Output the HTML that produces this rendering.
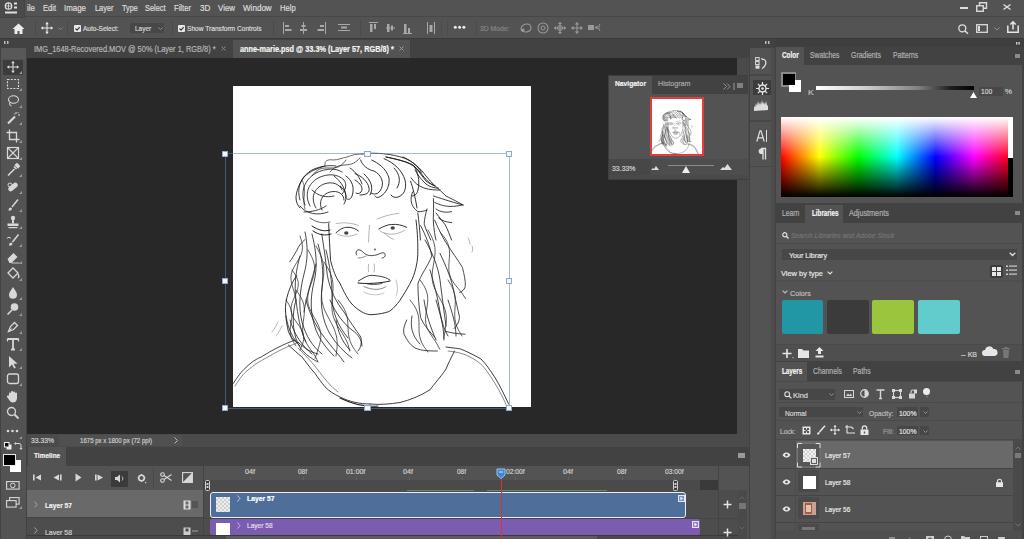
<!DOCTYPE html>
<html><head><meta charset="utf-8">
<style>
*{margin:0;padding:0;box-sizing:border-box}
html,body{width:1024px;height:539px;overflow:hidden;background:#535353;font-family:"Liberation Sans",sans-serif;color:#d6d6d6;font-size:9px;position:relative}
.a{position:absolute}
.t{position:absolute;white-space:pre;line-height:1;transform-origin:0 0;-webkit-text-stroke:0.2px currentColor}
svg{position:absolute;overflow:visible}
</style></head><body>
<div class="a" style="left:0px;top:0px;width:1024px;height:17px;background:#535353;"></div>
<div class="a" style="left:0px;top:16px;width:1024px;height:1px;background:#474747;"></div>
<div class="a" style="left:0px;top:17px;width:1024px;height:21px;background:#535353;"></div>
<div class="a" style="left:0px;top:38px;width:1024px;height:1px;background:#3a3a3a;"></div>
<div class="a" style="left:0px;top:0px;width:25px;height:18px;background:#4a4a4a;border-right:1px solid #444;border-bottom:1px solid #444"></div>
<svg style="left:0px;top:0px" width="25" height="18" viewBox="0 0 25 18" ><circle cx="8.5" cy="6" r="3.2" fill="none" stroke="#e0e0e0" stroke-width="1.3"/><path d="M5.3 6h6.4M8.5 2.8v6.4" stroke="#e0e0e0" stroke-width="0.8"/><rect x="14" y="2.5" width="3" height="2" fill="#e0e0e0"/><rect x="14" y="6.5" width="3" height="2" fill="#e0e0e0"/><rect x="5" y="11.5" width="12" height="2" fill="#e0e0e0"/></svg>
<div class="t" style="left:27px;top:4px;font-size:8.6px;color:#dcdcdc;transform:scaleX(0.929);">ile</div>
<div class="t" style="left:43.2px;top:4px;font-size:8.6px;color:#dcdcdc;transform:scaleX(0.878);">Edit</div>
<div class="t" style="left:64.4px;top:4px;font-size:8.6px;color:#dcdcdc;transform:scaleX(0.917);">Image</div>
<div class="t" style="left:94.5px;top:4px;font-size:8.6px;color:#dcdcdc;transform:scaleX(0.860);">Layer</div>
<div class="t" style="left:121.9px;top:4px;font-size:8.6px;color:#dcdcdc;transform:scaleX(0.842);">Type</div>
<div class="t" style="left:145px;top:4px;font-size:8.6px;color:#dcdcdc;transform:scaleX(0.858);">Select</div>
<div class="t" style="left:174.4px;top:4px;font-size:8.6px;color:#dcdcdc;transform:scaleX(0.890);">Filter</div>
<div class="t" style="left:199.6px;top:4px;font-size:8.6px;color:#dcdcdc;transform:scaleX(0.945);">3D</div>
<div class="t" style="left:218px;top:4px;font-size:8.6px;color:#dcdcdc;transform:scaleX(0.920);">View</div>
<div class="t" style="left:242.7px;top:4px;font-size:8.6px;color:#dcdcdc;transform:scaleX(0.939);">Window</div>
<div class="t" style="left:280.3px;top:4px;font-size:8.6px;color:#dcdcdc;transform:scaleX(0.888);">Help</div>
<div class="a" style="left:960px;top:7px;width:8px;height:2px;background:#dcdcdc;"></div>
<svg style="left:976px;top:2px" width="12" height="10" viewBox="0 0 12 10" ><rect x="0.75" y="3.75" width="6.5" height="5.5" fill="none" stroke="#dcdcdc" stroke-width="1.4"/><path d="M3.5 3.5V0.75h7v5.5H7.5" fill="none" stroke="#dcdcdc" stroke-width="1.4"/></svg>
<svg style="left:1003px;top:4px" width="8" height="6" viewBox="0 0 8 6" ><path d="M0.5 0.5l7 5M7.5 0.5l-7 5" stroke="#dcdcdc" stroke-width="1.5"/></svg>
<div class="a" style="left:0px;top:39px;width:1024px;height:19px;background:#424242;"></div>
<div class="a" style="left:233px;top:40px;width:177px;height:18px;background:#535353;"></div>
<div class="t" style="left:34.4px;top:45px;font-size:8.4px;color:#b4b4b4;transform:scaleX(0.886);">IMG_1648-Recovered.MOV @ 50% (Layer 1, RGB/8) *</div>
<svg style="left:221px;top:46px" width="5" height="5" viewBox="0 0 5 5" ><path d="M0.5 0.5l4 4M4.5 0.5l-4 4" stroke="#8a8a8a" stroke-width="1"/></svg>
<div class="t" style="left:239.7px;top:45px;font-size:8.4px;color:#f4f4f4;font-weight:bold;transform:scaleX(0.873);">anne-marie.psd @ 33.3% (Layer 57, RGB/8) *</div>
<svg style="left:399px;top:46px" width="5" height="5" viewBox="0 0 5 5" ><path d="M0.5 0.5l4 4M4.5 0.5l-4 4" stroke="#9a9a9a" stroke-width="1"/></svg>
<div class="a" style="left:0px;top:39px;width:27px;height:500px;background:#424242;"></div>
<div class="a" style="left:1px;top:48px;width:25px;height:491px;background:#535353;"></div>
<div class="a" style="left:1px;top:48px;width:25px;height:11px;background:#585858;"></div>
<svg style="left:4px;top:41px" width="6" height="4" viewBox="0 0 6 4" ><rect x="0" y="0" width="1.5" height="3" fill="#bbb"/><rect x="3" y="0" width="1.5" height="3" fill="#bbb"/></svg>
<div class="a" style="left:3px;top:60px;width:20px;height:15px;background:#3c3c3c;"></div>
<div class="a" style="left:27px;top:58px;width:710px;height:376px;background:#282828;"></div>
<div class="a" style="left:737px;top:58px;width:12px;height:376px;background:#4a4a4a;"></div>
<div class="a" style="left:233px;top:86px;width:298px;height:321px;background:#ffffff;"></div>
<div class="a" style="left:27px;top:434px;width:722px;height:13px;background:#4b4b4b;"></div>
<div class="a" style="left:59px;top:435px;width:123px;height:11px;background:#505050;"></div>
<div class="t" style="left:31px;top:437px;font-size:7.6px;color:#d0d0d0;transform:scaleX(0.893);">33.33%</div>
<div class="t" style="left:80.4px;top:437px;font-size:7.6px;color:#cfcfcf;transform:scaleX(0.801);">1675 px x 1800 px (72 ppi)</div>
<svg style="left:174px;top:437px" width="4" height="7" viewBox="0 0 4 7" ><path d="M0.5 0.5l3 3-3 3" fill="none" stroke="#bbb" stroke-width="1"/></svg>
<div class="a" style="left:27px;top:447px;width:722px;height:92px;background:#535353;"></div>
<div class="a" style="left:27px;top:447px;width:722px;height:19px;background:#424242;"></div>
<div class="a" style="left:28px;top:447px;width:38px;height:19px;background:#535353;"></div>
<div class="t" style="left:33.8px;top:452px;font-size:8.0px;color:#f2f2f2;font-weight:bold;transform:scaleX(0.811);">Timeline</div>
<svg style="left:738px;top:453px" width="7" height="5" viewBox="0 0 7 5" ><rect x="0" y="0" width="7" height="5" fill="#9a9a9a"/></svg>
<div class="a" style="left:27px;top:466px;width:176px;height:24px;background:#535353;"></div>
<div class="a" style="left:203px;top:466px;width:535px;height:24px;background:#535353;"></div>
<div class="a" style="left:27px;top:490px;width:176px;height:28px;background:#696969;"></div>
<div class="a" style="left:27px;top:518px;width:176px;height:21px;background:#4d4d4d;"></div>
<div class="a" style="left:27px;top:517px;width:176px;height:1px;background:#444;"></div>
<div class="a" style="left:203px;top:480px;width:515px;height:10px;background:#4a4a4a;"></div>
<div class="a" style="left:203px;top:490px;width:535px;height:49px;background:#4d4d4d;"></div>
<div class="a" style="left:718px;top:466px;width:1px;height:73px;background:#444;"></div>
<div class="a" style="left:700px;top:480px;width:18px;height:10px;background:#3a3a3a;"></div>
<div class="a" style="left:203px;top:466px;width:1px;height:73px;background:#444;"></div>
<div class="a" style="left:203px;top:518px;width:535px;height:1px;background:#454545;"></div>
<div class="a" style="left:749px;top:39px;width:26px;height:500px;background:#424242;"></div>
<div class="a" style="left:750px;top:48px;width:21px;height:491px;background:#535353;"></div>
<div class="a" style="left:771px;top:48px;width:4px;height:491px;background:#4c4c4c;"></div>
<svg style="left:765px;top:41px" width="6" height="4" viewBox="0 0 6 4" ><rect x="0" y="0" width="1.5" height="3" fill="#bbb"/><rect x="3" y="0" width="1.5" height="3" fill="#bbb"/></svg>
<div class="a" style="left:750px;top:73.5px;width:21px;height:2px;background:#474747;"></div>
<div class="a" style="left:750px;top:120px;width:21px;height:2px;background:#474747;"></div>
<div class="a" style="left:750px;top:165.5px;width:21px;height:1.5px;background:#474747;"></div>
<div class="a" style="left:753px;top:80px;width:18px;height:15px;background:#3c3c3c;"></div>
<div class="a" style="left:775px;top:39px;width:249px;height:500px;background:#424242;"></div>
<div class="a" style="left:775px;top:39px;width:249px;height:8px;background:#3f3f3f;"></div>
<svg style="left:1016px;top:41.5px" width="4" height="3" viewBox="0 0 4 3" ><rect x="0" y="0" width="1.4" height="2.6" fill="#ccc"/><rect x="2.4" y="0" width="1.4" height="2.6" fill="#ccc"/></svg>
<div class="a" style="left:776px;top:47px;width:246px;height:18px;background:#424242;"></div>
<div class="a" style="left:776px;top:47px;width:28px;height:18px;background:#535353;"></div>
<div class="a" style="left:776px;top:65px;width:246px;height:138px;background:#535353;"></div>
<div class="t" style="left:782px;top:52px;font-size:8.2px;color:#f4f4f4;font-weight:bold;transform:scaleX(0.781);">Color</div>
<div class="t" style="left:809.6px;top:52px;font-size:8.2px;color:#b0b0b0;transform:scaleX(0.828);">Swatches</div>
<div class="t" style="left:850.7px;top:52px;font-size:8.2px;color:#b0b0b0;transform:scaleX(0.845);">Gradients</div>
<div class="t" style="left:893px;top:52px;font-size:8.2px;color:#b0b0b0;transform:scaleX(0.820);">Patterns</div>
<div class="a" style="left:776px;top:205px;width:246px;height:18px;background:#424242;"></div>
<div class="a" style="left:805px;top:205px;width:38px;height:18px;background:#535353;"></div>
<div class="a" style="left:776px;top:223px;width:246px;height:138px;background:#535353;"></div>
<div class="t" style="left:781.8px;top:210px;font-size:8.2px;color:#b0b0b0;transform:scaleX(0.821);">Learn</div>
<div class="t" style="left:811.5px;top:210px;font-size:8.2px;color:#f4f4f4;font-weight:bold;transform:scaleX(0.766);">Libraries</div>
<div class="t" style="left:849px;top:210px;font-size:8.2px;color:#b0b0b0;transform:scaleX(0.883);">Adjustments</div>
<div class="a" style="left:776px;top:362px;width:246px;height:19px;background:#424242;"></div>
<div class="a" style="left:776px;top:362px;width:31px;height:19px;background:#535353;"></div>
<div class="a" style="left:776px;top:381px;width:246px;height:158px;background:#535353;"></div>
<div class="t" style="left:782px;top:368px;font-size:8.2px;color:#f4f4f4;font-weight:bold;transform:scaleX(0.769);">Layers</div>
<div class="t" style="left:813.3px;top:368px;font-size:8.2px;color:#b0b0b0;transform:scaleX(0.835);">Channels</div>
<div class="t" style="left:853px;top:368px;font-size:8.2px;color:#b0b0b0;transform:scaleX(0.841);">Paths</div>
<div class="a" style="left:1015px;top:54px;width:5px;height:4.4px;background:#8a8a8a;"></div>
<div class="a" style="left:1015px;top:211px;width:5px;height:4.4px;background:#8a8a8a;"></div>
<div class="a" style="left:1015px;top:370px;width:5px;height:4.4px;background:#8a8a8a;"></div>
<svg style="left:12px;top:23px" width="13" height="11" viewBox="0 0 13 11" ><path d="M6.5 0.5L0.5 6h2v5h3V8h2v3h3V6h2z" fill="#ececec"/></svg>
<div class="a" style="left:35px;top:20px;width:1px;height:16px;background:#4a4a4a;"></div>
<svg style="left:41px;top:22px" width="12" height="12" viewBox="0 0 12 12" ><path d="M6 0.5v11M0.5 6h11" stroke="#e6e6e6" stroke-width="1.1"/><path d="M6 0L4.2 2.2h3.6zM6 12L4.2 9.8h3.6zM0 6l2.2-1.8v3.6zM12 6L9.8 4.2v3.6z" fill="#e6e6e6"/></svg>
<svg style="left:58px;top:27px" width="5" height="3" viewBox="0 0 5 3" ><path d="M0.5 0.5l2 2 2-2" fill="none" stroke="#888" stroke-width="0.9"/></svg>
<div class="a" style="left:67px;top:20px;width:1px;height:16px;background:#4a4a4a;"></div>
<div class="a" style="left:74px;top:25px;width:7px;height:7px;background:#e8e8e8;border-radius:1px"></div>
<svg style="left:74px;top:25px" width="7" height="7" viewBox="0 0 7 7" ><path d="M1.5 3.5l1.6 1.6 2.6-3" fill="none" stroke="#3a3a3a" stroke-width="1.2"/></svg>
<div class="t" style="left:83.4px;top:25px;font-size:7.6px;color:#dadada;transform:scaleX(0.860);">Auto-Select:</div>
<div class="a" style="left:130px;top:23px;width:34px;height:10px;background:#474747;"></div>
<div class="t" style="left:134.8px;top:25px;font-size:7.6px;color:#d6d6d6;transform:scaleX(0.853);">Layer</div>
<svg style="left:158px;top:27px" width="5" height="3" viewBox="0 0 5 3" ><path d="M0.5 0.5l2 2 2-2" fill="none" stroke="#999" stroke-width="0.9"/></svg>
<div class="a" style="left:172px;top:20px;width:1px;height:16px;background:#4a4a4a;"></div>
<div class="a" style="left:177.5px;top:25px;width:7px;height:7px;background:#e8e8e8;border-radius:1px"></div>
<svg style="left:177.5px;top:25px" width="7" height="7" viewBox="0 0 7 7" ><path d="M1.5 3.5l1.6 1.6 2.6-3" fill="none" stroke="#3a3a3a" stroke-width="1.2"/></svg>
<div class="t" style="left:187.2px;top:25px;font-size:7.6px;color:#dadada;transform:scaleX(0.870);">Show Transform Controls</div>
<div class="a" style="left:273px;top:20px;width:1px;height:16px;background:#4a4a4a;"></div>
<svg style="left:283px;top:22px" width="9" height="12" viewBox="0 0 9 12" ><path d="M0.5 0v12" stroke="#a8a8a8"/><rect x="2" y="3" width="4" height="2" fill="#a8a8a8"/><rect x="2" y="7" width="6.5" height="2" fill="#a8a8a8"/></svg>
<svg style="left:299px;top:22px" width="9" height="12" viewBox="0 0 9 12" ><path d="M4.5 0v12" stroke="#a8a8a8"/><rect x="2.5" y="3" width="4" height="2" fill="#a8a8a8"/><rect x="1" y="7" width="7" height="2" fill="#a8a8a8"/></svg>
<svg style="left:317px;top:22px" width="9" height="12" viewBox="0 0 9 12" ><path d="M8.5 0v12" stroke="#a8a8a8"/><rect x="3" y="3" width="4" height="2" fill="#a8a8a8"/><rect x="0.5" y="7" width="6.5" height="2" fill="#a8a8a8"/></svg>
<svg style="left:338px;top:24px" width="12" height="7" viewBox="0 0 12 7" ><path d="M0 0.5h12M0 6.5h12" stroke="#a8a8a8"/><rect x="3" y="2.5" width="6" height="2" fill="#a8a8a8"/></svg>
<div class="a" style="left:360px;top:20px;width:1px;height:16px;background:#4a4a4a;"></div>
<svg style="left:369px;top:22px" width="9" height="12" viewBox="0 0 9 12" ><path d="M0 0.5h9" stroke="#a8a8a8"/><rect x="1" y="2" width="2.5" height="8" fill="#a8a8a8"/><rect x="5" y="2" width="2" height="5" fill="#a8a8a8"/></svg>
<svg style="left:386px;top:22px" width="9" height="12" viewBox="0 0 9 12" ><path d="M0 6h9" stroke="#a8a8a8"/><rect x="1" y="2" width="2.5" height="8" fill="#a8a8a8"/><rect x="5" y="3.5" width="2" height="5" fill="#a8a8a8"/></svg>
<svg style="left:403px;top:22px" width="9" height="12" viewBox="0 0 9 12" ><path d="M0 11.5h9" stroke="#a8a8a8"/><rect x="1" y="2" width="2.5" height="9" fill="#a8a8a8"/><rect x="5" y="6" width="2" height="5" fill="#a8a8a8"/></svg>
<svg style="left:427px;top:22px" width="8" height="12" viewBox="0 0 8 12" ><path d="M0.5 0v12M7.5 0v12" stroke="#a8a8a8"/><rect x="2.5" y="3" width="3" height="7" fill="#a8a8a8"/></svg>
<div class="a" style="left:441px;top:20px;width:1px;height:16px;background:#4c4c4c;"></div>
<div class="a" style="left:447px;top:20px;width:1px;height:16px;background:#4c4c4c;"></div>
<svg style="left:452px;top:25px" width="14" height="5" viewBox="0 0 14 5" ><circle cx="3.3" cy="2.2" r="1.5" fill="#ececec"/><circle cx="7.6" cy="2.2" r="1.5" fill="#ececec"/><circle cx="11.9" cy="2.2" r="1.5" fill="#ececec"/></svg>
<div class="a" style="left:476px;top:20px;width:1px;height:16px;background:#4c4c4c;"></div>
<div class="t" style="left:480px;top:25px;font-size:7.8px;color:#858585;transform:scaleX(0.875);">3D Mode:</div>
<svg style="left:520px;top:22px" width="12" height="11" viewBox="0 0 12 11" ><path d="M1 7c0-3 3-5 6-5s4 2 4 4-2 4-5 4S1 9 1 7z" fill="none" stroke="#9a9a9a" stroke-width="1.1"/><circle cx="3" cy="8" r="1.6" fill="#9a9a9a"/></svg>
<svg style="left:537px;top:22px" width="12" height="12" viewBox="0 0 12 12" ><circle cx="6" cy="6" r="5" fill="none" stroke="#9a9a9a" stroke-width="1.1"/><circle cx="6" cy="6" r="2" fill="none" stroke="#9a9a9a" stroke-width="1"/></svg>
<svg style="left:554px;top:22px" width="12" height="12" viewBox="0 0 12 12" ><path d="M6 0.5v11M0.5 6h11" stroke="#9a9a9a" stroke-width="1.1"/><circle cx="6" cy="6" r="2.5" fill="none" stroke="#9a9a9a"/><path d="M6 0L4 2h4zM6 12L4 10h4zM0 6l2-2v4zM12 6l-2-2v4z" fill="#9a9a9a"/></svg>
<svg style="left:571px;top:22px" width="12" height="12" viewBox="0 0 12 12" ><path d="M6 2v8M2 6h8" stroke="#9a9a9a" stroke-width="1.1"/><path d="M6 0L3.8 2.5h4.4zM6 12L3.8 9.5h4.4zM0 6l2.5-2.2v4.4zM12 6L9.5 3.8v4.4z" fill="#9a9a9a"/></svg>
<svg style="left:588px;top:23px" width="13" height="9" viewBox="0 0 13 9" ><rect x="0" y="2" width="6" height="5" fill="#9a9a9a"/><path d="M6.5 4.5l3-2v4z" fill="#9a9a9a"/><path d="M12 1c-1.5 1-1.5 6 0 7" fill="none" stroke="#9a9a9a"/></svg>
<svg style="left:958px;top:24px" width="11" height="10" viewBox="0 0 11 10" ><circle cx="4.3" cy="4.3" r="3.5" fill="none" stroke="#e0e0e0" stroke-width="1.3"/><path d="M6.8 6.8l3.2 3" stroke="#e0e0e0" stroke-width="1.5"/></svg>
<svg style="left:976px;top:24px" width="12" height="9" viewBox="0 0 12 9" ><rect x="0.7" y="0.7" width="10.6" height="7.6" fill="none" stroke="#dcdcdc" stroke-width="1.3"/><rect x="2" y="2" width="2" height="5" fill="#dcdcdc"/></svg>
<svg style="left:994px;top:27px" width="6" height="4" viewBox="0 0 6 4" ><path d="M0.5 0.5l2.5 2.5 2.5-2.5" fill="none" stroke="#999" stroke-width="0.9"/></svg>
<svg style="left:1007px;top:21px" width="12" height="12" viewBox="0 0 12 12" ><path d="M0.8 4.5v6.7h10.4V4.5" fill="none" stroke="#e6e6e6" stroke-width="1.5"/><path d="M6 8.5V1M3.3 3.5L6 0.8l2.7 2.7" fill="none" stroke="#e6e6e6" stroke-width="1.5"/></svg>
<svg style="left:6px;top:60px" width="14" height="14" viewBox="0 0 14 14" ><path d="M7 1.5v11M1.5 7h11" stroke="#d8d8d8" stroke-width="1.1"/><path d="M7 1L5.2 3.2h3.6zM7 13L5.2 10.8h3.6zM1 7l2.2-1.8v3.6zM13 7l-2.2-1.8v3.6z" fill="#d8d8d8"/></svg>
<svg style="left:19px;top:71px" width="3" height="3" viewBox="0 0 3 3" ><path d="M3 0v3H0z" fill="#9a9a9a"/></svg>
<svg style="left:6px;top:77px" width="14" height="14" viewBox="0 0 14 14" ><rect x="1.5" y="2.5" width="11" height="9" fill="none" stroke="#d8d8d8" stroke-width="1.1" stroke-dasharray="2 1.3"/></svg>
<svg style="left:19px;top:88px" width="3" height="3" viewBox="0 0 3 3" ><path d="M3 0v3H0z" fill="#9a9a9a"/></svg>
<svg style="left:6px;top:94px" width="14" height="14" viewBox="0 0 14 14" ><ellipse cx="7.5" cy="5.5" rx="5" ry="3.8" fill="none" stroke="#d8d8d8" stroke-width="1.1"/><path d="M4 8.5c-1 1.5 0 3 1.5 3.5" fill="none" stroke="#d8d8d8" stroke-width="1.1"/></svg>
<svg style="left:19px;top:105px" width="3" height="3" viewBox="0 0 3 3" ><path d="M3 0v3H0z" fill="#9a9a9a"/></svg>
<svg style="left:6px;top:111px" width="14" height="14" viewBox="0 0 14 14" ><path d="M2 12.5L9 5.5" stroke="#d8d8d8" stroke-width="2.2"/><path d="M10 1v2M12 4h2M11.5 2.2l1-1M9 3.5L8 2.5" stroke="#d8d8d8" stroke-width="1"/></svg>
<svg style="left:19px;top:122px" width="3" height="3" viewBox="0 0 3 3" ><path d="M3 0v3H0z" fill="#9a9a9a"/></svg>
<svg style="left:6px;top:129px" width="14" height="14" viewBox="0 0 14 14" ><path d="M3.5 0.5v10h10M0.5 3.5h10v10" fill="none" stroke="#d8d8d8" stroke-width="1.3"/></svg>
<svg style="left:19px;top:140px" width="3" height="3" viewBox="0 0 3 3" ><path d="M3 0v3H0z" fill="#9a9a9a"/></svg>
<svg style="left:6px;top:146px" width="14" height="14" viewBox="0 0 14 14" ><rect x="1.5" y="1.5" width="11" height="11" fill="none" stroke="#d8d8d8" stroke-width="1.2"/><path d="M1.5 1.5l11 11M12.5 1.5l-11 11" stroke="#d8d8d8" stroke-width="1.1"/></svg>
<svg style="left:19px;top:157px" width="3" height="3" viewBox="0 0 3 3" ><path d="M3 0v3H0z" fill="#9a9a9a"/></svg>
<svg style="left:6px;top:163px" width="14" height="14" viewBox="0 0 14 14" ><path d="M2 12.5l6.5-6.5" stroke="#d8d8d8" stroke-width="1.6"/><path d="M8 3.5l2.5 2.5M9.5 2l1.5-1.2 2.2 2.2L12 4.5z" stroke="#d8d8d8" stroke-width="1.6" fill="#d8d8d8"/></svg>
<svg style="left:19px;top:174px" width="3" height="3" viewBox="0 0 3 3" ><path d="M3 0v3H0z" fill="#9a9a9a"/></svg>
<svg style="left:6px;top:180px" width="14" height="14" viewBox="0 0 14 14" ><rect x="1.5" y="4.5" width="11" height="5" rx="2.5" transform="rotate(-40 7 7)" fill="#d8d8d8"/><circle cx="4" cy="5" r="2" fill="none" stroke="#d8d8d8"/></svg>
<svg style="left:19px;top:191px" width="3" height="3" viewBox="0 0 3 3" ><path d="M3 0v3H0z" fill="#9a9a9a"/></svg>
<svg style="left:6px;top:198px" width="14" height="14" viewBox="0 0 14 14" ><path d="M2.5 12.5c0-2 1-3 2.5-3l1 1c0 1.5-1.5 2.5-3.5 2z" fill="#d8d8d8"/><path d="M6 9l6-7.5" stroke="#d8d8d8" stroke-width="1.5"/></svg>
<svg style="left:19px;top:209px" width="3" height="3" viewBox="0 0 3 3" ><path d="M3 0v3H0z" fill="#9a9a9a"/></svg>
<svg style="left:6px;top:215px" width="14" height="14" viewBox="0 0 14 14" ><circle cx="7" cy="3" r="2.2" fill="#d8d8d8"/><rect x="6" y="4.5" width="2" height="4" fill="#d8d8d8"/><rect x="1.5" y="8.5" width="11" height="2.5" fill="#d8d8d8"/><rect x="2.5" y="12" width="9" height="1.2" fill="#d8d8d8"/></svg>
<svg style="left:19px;top:226px" width="3" height="3" viewBox="0 0 3 3" ><path d="M3 0v3H0z" fill="#9a9a9a"/></svg>
<svg style="left:6px;top:233px" width="14" height="14" viewBox="0 0 14 14" ><path d="M3 12.5c0-2 1-3 2.5-3l1 1c0 1.5-1.5 2.5-3.5 2z" fill="#d8d8d8"/><path d="M6.5 9l6-7.5" stroke="#d8d8d8" stroke-width="1.5"/><path d="M1 5.5c1-1.5 3-1.5 4 0" fill="none" stroke="#d8d8d8"/></svg>
<svg style="left:19px;top:244px" width="3" height="3" viewBox="0 0 3 3" ><path d="M3 0v3H0z" fill="#9a9a9a"/></svg>
<svg style="left:6px;top:250px" width="14" height="14" viewBox="0 0 14 14" ><path d="M1.5 9l6-6 4 4-6 6h-2z" fill="#d8d8d8"/><path d="M5.5 13h8" stroke="#d8d8d8" stroke-width="0.9"/></svg>
<svg style="left:19px;top:261px" width="3" height="3" viewBox="0 0 3 3" ><path d="M3 0v3H0z" fill="#9a9a9a"/></svg>
<svg style="left:6px;top:267px" width="14" height="14" viewBox="0 0 14 14" ><path d="M2 6l5-5 5 5-5 5z" fill="none" stroke="#d8d8d8" stroke-width="1.3"/><path d="M12 7c1 1.5 1.5 3 0 4" stroke="#d8d8d8" stroke-width="1.3" fill="none"/></svg>
<svg style="left:19px;top:278px" width="3" height="3" viewBox="0 0 3 3" ><path d="M3 0v3H0z" fill="#9a9a9a"/></svg>
<svg style="left:6px;top:286px" width="14" height="14" viewBox="0 0 14 14" ><path d="M7 1c-2 3.5-4 5.5-4 7.8a4 4 0 0 0 8 0C11 6.5 9 4.5 7 1z" fill="#d8d8d8"/></svg>
<svg style="left:19px;top:297px" width="3" height="3" viewBox="0 0 3 3" ><path d="M3 0v3H0z" fill="#9a9a9a"/></svg>
<svg style="left:6px;top:302px" width="14" height="14" viewBox="0 0 14 14" ><circle cx="8.5" cy="5" r="3.8" fill="#d8d8d8"/><path d="M6 8l-4.5 4.5" stroke="#d8d8d8" stroke-width="1.6"/></svg>
<svg style="left:19px;top:313px" width="3" height="3" viewBox="0 0 3 3" ><path d="M3 0v3H0z" fill="#9a9a9a"/></svg>
<svg style="left:6px;top:320px" width="14" height="14" viewBox="0 0 14 14" ><path d="M2.5 11.5l2-5 4-4 3 3-4 4z" fill="none" stroke="#d8d8d8" stroke-width="1.3"/><path d="M2.5 11.5l3-3" stroke="#d8d8d8"/></svg>
<svg style="left:19px;top:331px" width="3" height="3" viewBox="0 0 3 3" ><path d="M3 0v3H0z" fill="#9a9a9a"/></svg>
<svg style="left:6px;top:337px" width="14" height="14" viewBox="0 0 14 14" ><path d="M1.5 2h11M7 2v10.5M5 12.5h4" stroke="#d8d8d8" stroke-width="1.8"/><path d="M1.5 1.5v3M12.5 1.5v3" stroke="#d8d8d8" stroke-width="1.2"/></svg>
<svg style="left:19px;top:348px" width="3" height="3" viewBox="0 0 3 3" ><path d="M3 0v3H0z" fill="#9a9a9a"/></svg>
<svg style="left:6px;top:355px" width="14" height="14" viewBox="0 0 14 14" ><path d="M3 1v11.5l3-3 2.2 4 1.6-.8-2.2-4h4z" fill="#d8d8d8"/></svg>
<svg style="left:19px;top:366px" width="3" height="3" viewBox="0 0 3 3" ><path d="M3 0v3H0z" fill="#9a9a9a"/></svg>
<svg style="left:6px;top:372px" width="14" height="14" viewBox="0 0 14 14" ><rect x="1.5" y="2" width="11" height="9.5" rx="2" fill="none" stroke="#d8d8d8" stroke-width="1.3"/></svg>
<svg style="left:19px;top:383px" width="3" height="3" viewBox="0 0 3 3" ><path d="M3 0v3H0z" fill="#9a9a9a"/></svg>
<svg style="left:6px;top:388.5px" width="14" height="14" viewBox="0 0 14 14" ><path d="M3 7V4.5a1 1 0 0 1 2 0V3a1 1 0 0 1 2 0v0.5a1 1 0 0 1 2 0V4.5a1 1 0 0 1 2 0V9c0 3-2 4.5-4 4.5S4 12.5 2.5 10L1 8a1 1 0 0 1 2-1z" fill="#d8d8d8"/></svg>
<svg style="left:6px;top:406px" width="14" height="14" viewBox="0 0 14 14" ><circle cx="5.5" cy="5.5" r="4" fill="none" stroke="#d8d8d8" stroke-width="1.3"/><path d="M8.5 8.5l4 4" stroke="#d8d8d8" stroke-width="1.8"/></svg>
<svg style="left:5px;top:429px" width="16" height="4" viewBox="0 0 16 4" ><circle cx="3" cy="2" r="1.3" fill="#d8d8d8"/><circle cx="7.5" cy="2" r="1.3" fill="#d8d8d8"/><circle cx="12" cy="2" r="1.3" fill="#d8d8d8"/></svg>
<svg style="left:19px;top:436px" width="3" height="3" viewBox="0 0 3 3" ><path d="M3 0v3H0z" fill="#9a9a9a"/></svg>
<svg style="left:4px;top:442px" width="8" height="8" viewBox="0 0 8 8" ><rect x="2.5" y="2.5" width="5" height="5" fill="#eee"/><rect x="0.5" y="0.5" width="4.5" height="4.5" fill="#111" stroke="#eee" stroke-width="1"/></svg>
<svg style="left:14px;top:442px" width="8" height="8" viewBox="0 0 8 8" ><path d="M1 1.5h4a2 2 0 0 1 2 2v3.5" fill="none" stroke="#d8d8d8" stroke-width="1"/><path d="M0 1.5L2 0v3zM7 8L5.5 6h3z" fill="#d8d8d8"/></svg>
<div class="a" style="left:10px;top:460px;width:11px;height:12px;background:#ffffff;"></div>
<div class="a" style="left:3px;top:454px;width:13px;height:12px;background:#000000;border:1px solid #e8e8e8"></div>
<svg style="left:6px;top:481px" width="14" height="9" viewBox="0 0 14 9" ><rect x="0.6" y="0.6" width="12.5" height="7.5" fill="none" stroke="#d8d8d8" stroke-width="1.1"/><circle cx="6.8" cy="4.4" r="2.3" fill="none" stroke="#d8d8d8" stroke-width="1"/></svg>
<svg style="left:6px;top:497px" width="14" height="11" viewBox="0 0 14 11" ><rect x="3.6" y="0.6" width="9.5" height="6.5" fill="none" stroke="#d8d8d8" stroke-width="1.1"/><rect x="0.6" y="3.6" width="9.5" height="6.5" fill="#535353" stroke="#d8d8d8" stroke-width="1.1"/></svg>
<svg style="left:19px;top:506px" width="3" height="3" viewBox="0 0 3 3" ><path d="M3 0v3H0z" fill="#9a9a9a"/></svg>
<svg style="left:755px;top:57px" width="12" height="12" viewBox="0 0 12 12" ><rect x="0.6" y="0.6" width="3.5" height="3" fill="none" stroke="#ddd" stroke-width="1"/><rect x="0.6" y="4.6" width="3.5" height="3" fill="none" stroke="#ddd" stroke-width="1"/><rect x="0.5" y="8.5" width="4" height="3.2" fill="#ddd"/><path d="M7 2.5c3-1 4.5 2 3.5 5S8 11 7 11.5" fill="none" stroke="#ddd" stroke-width="1.3"/><path d="M6 1l2 0.5-1 2z" fill="#ddd"/></svg>
<svg style="left:756px;top:82px" width="13" height="13" viewBox="0 0 13 13" ><circle cx="6.5" cy="6.5" r="3.5" fill="none" stroke="#e6e6e6" stroke-width="1.4"/><circle cx="6.5" cy="6.5" r="1.3" fill="#e6e6e6"/><path d="M6.5 0v3M6.5 10v3M0 6.5h3M10 6.5h3M1.9 1.9l2 2M9.1 9.1l2 2M11.1 1.9l-2 2M3.9 9.1l-2 2" stroke="#e6e6e6" stroke-width="1.2"/></svg>
<svg style="left:754px;top:100px" width="14" height="11" viewBox="0 0 14 11" ><path d="M0 11V6l1 1.5L2 3l1 3 1-5 1 4 1-3 1 3 1-5 1 4 1-2 1 3 1-4 1 4 1 1v4z" fill="#dcdcdc"/></svg>
<svg style="left:756px;top:130px" width="12" height="12" viewBox="0 0 12 12" ><path d="M0.8 11.5L4 0.8h1L8.2 11.5M2 7.8h5" fill="none" stroke="#e0e0e0" stroke-width="1.2"/><path d="M10.5 0v12" stroke="#e0e0e0" stroke-width="1"/></svg>
<svg style="left:757px;top:148px" width="9" height="12" viewBox="0 0 9 12" ><path d="M4 0.5h4.5v11M6 0.5v11" stroke="#e0e0e0" stroke-width="1.3" fill="none"/><path d="M4.5 0.5a2.8 2.8 0 0 0 0 5.6h1.5V0.5z" fill="#e0e0e0"/></svg>
<div class="a" style="left:608px;top:75px;width:140px;height:105px;background:#3e3e3e;"></div>
<div class="a" style="left:609px;top:76px;width:139px;height:18px;background:#424242;"></div>
<div class="a" style="left:609px;top:76px;width:43px;height:18px;background:#535353;"></div>
<div class="a" style="left:609px;top:94px;width:139px;height:65px;background:#535353;"></div>
<div class="a" style="left:609px;top:159px;width:139px;height:16px;background:#4d4d4d;"></div>
<div class="a" style="left:609px;top:159px;width:42px;height:16px;background:#474747;"></div>
<div class="a" style="left:609px;top:175px;width:139px;height:4px;background:#4a4a4a;"></div>
<div class="t" style="left:615px;top:80px;font-size:7.8px;color:#f2f2f2;font-weight:bold;transform:scaleX(0.862);">Navigator</div>
<div class="t" style="left:657.6px;top:80px;font-size:7.8px;color:#a8a8a8;transform:scaleX(0.912);">Histogram</div>
<svg style="left:723px;top:83px" width="12" height="7" viewBox="0 0 12 7" ><path d="M0.5 0.5l3 3-3 3M4 0.5l3 3-3 3" fill="none" stroke="#999" stroke-width="0.9"/><path d="M11 0v7" stroke="#999"/></svg>
<div class="a" style="left:737px;top:83px;width:6px;height:5px;background:#808080;"></div>
<div class="a" style="left:650px;top:97px;width:54px;height:59px;background:#e23c3c;"></div>
<div class="a" style="left:652px;top:99px;width:50px;height:55px;background:#ffffff;"></div>
<div class="t" style="left:612px;top:165px;font-size:7.4px;color:#cfcfcf;transform:scaleX(0.937);">33.33%</div>
<svg style="left:651px;top:166px" width="8" height="4" viewBox="0 0 8 4" ><path d="M0 4l2-2 1 1 2-3 3 4z" fill="#ddd"/></svg>
<div class="a" style="left:668px;top:165px;width:46px;height:1px;background:#8a8a8a;"></div>
<svg style="left:682px;top:166px" width="8" height="7" viewBox="0 0 8 7" ><path d="M4 0l4 7H0z" fill="#eee"/></svg>
<svg style="left:720px;top:164px" width="12" height="6" viewBox="0 0 12 6" ><path d="M0 6l3-3 1.5 1 3-4 4.5 6z" fill="#ddd"/></svg>
<div class="a" style="left:780.7px;top:72px;width:15.5px;height:14.6px;background:#8a8a8a;"></div>
<div class="a" style="left:788.7px;top:79.7px;width:12.3px;height:12.3px;background:#ffffff;"></div>
<div class="a" style="left:782.5px;top:74px;width:12px;height:11px;background:#000000;"></div>
<div class="t" style="left:807.8px;top:89px;font-size:7.2px;color:#bdbdbd;transform:scaleX(1.188);">K</div>
<div class="a" style="left:816px;top:85.8px;width:158px;height:4.4px;background:;background:linear-gradient(to right,#ffffff 0%,#d0d0d0 30%,#808080 65%,#202020 85%,#000 100%)"></div>
<svg style="left:969.6px;top:91.5px" width="7" height="6" viewBox="0 0 7 6" ><path d="M3.5 0L7 6H0z" fill="#ffffff"/></svg>
<div class="a" style="left:978.5px;top:86.8px;width:24.5px;height:9px;background:#484848;"></div>
<div class="t" style="left:980.7px;top:88px;font-size:7.8px;color:#d6d6d6;transform:scaleX(0.853);">100</div>
<div class="t" style="left:1005px;top:88px;font-size:7.8px;color:#c8c8c8;">%</div>
<div class="a" style="left:781px;top:117.3px;width:232px;height:80.2px;background:#000;background:linear-gradient(to bottom,#ffffff 0%,rgba(255,255,255,0) 50%,rgba(0,0,0,0) 50%,#000 100%),linear-gradient(to right,#f00 0%,#ff0 16.67%,#0f0 33.33%,#0ff 50%,#00f 66.67%,#f0f 83.33%,#f00 100%)"></div>
<div class="a" style="left:1008px;top:117.3px;width:5px;height:40.5px;background:#ffffff;"></div>
<div class="a" style="left:1008px;top:157.8px;width:5px;height:39.7px;background:#000000;"></div>
<div class="a" style="left:776px;top:243px;width:246px;height:1px;background:#4a4a4a;"></div>
<svg style="left:781.5px;top:231.5px" width="7" height="7" viewBox="0 0 7 7" ><circle cx="2.8" cy="2.8" r="2.1" fill="none" stroke="#ddd" stroke-width="1.2"/><path d="M4.3 4.3l2.2 2.2" stroke="#ddd" stroke-width="1.4"/></svg>
<div class="t" style="left:791px;top:232px;font-size:7.8px;color:#747474;font-style:italic;transform:scaleX(0.877);">Search Libraries and Adobe Stock</div>
<div class="a" style="left:782.4px;top:249px;width:234.6px;height:10.8px;background:#474747;"></div>
<div class="t" style="left:789px;top:252px;font-size:8.0px;color:#e6e6e6;transform:scaleX(0.887);">Your Library</div>
<svg style="left:1009px;top:252px" width="7" height="5" viewBox="0 0 7 5" ><path d="M0.7 0.7l2.8 2.8 2.8-2.8" fill="none" stroke="#e0e0e0" stroke-width="1.3"/></svg>
<div class="t" style="left:781px;top:270px;font-size:8.0px;color:#e6e6e6;transform:scaleX(0.929);">View by type</div>
<svg style="left:826.5px;top:270.5px" width="6" height="4" viewBox="0 0 6 4" ><path d="M0.6 0.6l2.4 2.4 2.4-2.4" fill="none" stroke="#e0e0e0" stroke-width="1.2"/></svg>
<div class="a" style="left:990px;top:264.5px;width:13px;height:13px;background:#3c3c3c;border-radius:2px"></div>
<svg style="left:992px;top:266.5px" width="9" height="9" viewBox="0 0 9 9" ><rect x="0" y="0" width="4" height="4" fill="#e8e8e8"/><rect x="5" y="0" width="4" height="4" fill="#e8e8e8"/><rect x="0" y="5" width="4" height="4" fill="#e8e8e8"/><rect x="5" y="5" width="4" height="4" fill="#e8e8e8"/></svg>
<svg style="left:1006px;top:265px" width="11" height="11" viewBox="0 0 11 11" ><rect x="0" y="0.5" width="2" height="1.5" fill="#ccc"/><rect x="3" y="0.5" width="8" height="1.2" fill="#ccc"/><rect x="0" y="4.5" width="2" height="1.5" fill="#ccc"/><rect x="3" y="4.5" width="8" height="1.2" fill="#ccc"/><rect x="0" y="8.5" width="2" height="1.5" fill="#ccc"/><rect x="3" y="8.5" width="8" height="1.2" fill="#ccc"/></svg>
<div class="a" style="left:776px;top:280px;width:246px;height:2px;background:#4e4e4e;"></div>
<svg style="left:781.5px;top:290px" width="6" height="4" viewBox="0 0 6 4" ><path d="M0.6 0.6l2.4 2.4 2.4-2.4" fill="none" stroke="#bbb" stroke-width="1.2"/></svg>
<div class="t" style="left:789.8px;top:290px;font-size:8.0px;color:#bdbdbd;transform:scaleX(0.899);">Colors</div>
<div class="a" style="left:781.8px;top:300px;width:41.4px;height:34px;background:#2196a4;border-radius:2px"></div>
<div class="a" style="left:827.3px;top:300px;width:41.3px;height:34px;background:#3b3b3b;border-radius:2px"></div>
<div class="a" style="left:872.3px;top:300px;width:41.7px;height:34px;background:#9bc53d;border-radius:2px"></div>
<div class="a" style="left:918px;top:300px;width:41.8px;height:34px;background:#62cbcc;border-radius:2px"></div>
<div class="a" style="left:776px;top:344px;width:246px;height:1px;background:#4a4a4a;"></div>
<div class="a" style="left:776px;top:345px;width:246px;height:16px;background:#4f4f4f;"></div>
<svg style="left:782px;top:348px" width="12" height="12" viewBox="0 0 12 12" ><path d="M5 1v9M0.5 5.5h9" stroke="#e6e6e6" stroke-width="1.6"/><path d="M10 9.5l1 1 1-1z" fill="#ddd"/></svg>
<svg style="left:797.5px;top:347.5px" width="12" height="10" viewBox="0 0 12 10" ><path d="M0 1h4l1.5 1.5H11V10H0z" fill="#e6e6e6"/></svg>
<svg style="left:814.5px;top:346.5px" width="9" height="11" viewBox="0 0 9 11" ><path d="M4.5 0L8.5 4H6v3H3V4H0.5z" fill="#e6e6e6"/><rect x="0.5" y="8.5" width="8" height="2" fill="#e6e6e6"/></svg>
<div class="t" style="left:961px;top:352px;font-size:6.8px;color:#d0d0d0;transform:scaleX(1.033);">-- KB</div>
<svg style="left:982px;top:346px" width="15" height="10" viewBox="0 0 15 10" ><path d="M3 10a3 3 0 0 1 0-6a4.5 4.5 0 0 1 8.5-1A3.5 3.5 0 0 1 12.5 10z" fill="#e6e6e6"/></svg>
<svg style="left:1002px;top:347px" width="8" height="11" viewBox="0 0 8 11" ><rect x="0" y="1" width="8" height="1.4" fill="#777"/><rect x="2.5" y="0" width="3" height="1.4" fill="#777"/><path d="M1 3h6l-0.6 8H1.6z" fill="#777"/></svg>
<div class="a" style="left:776px;top:381px;width:246px;height:1px;background:#4a4a4a;"></div>
<div class="a" style="left:779px;top:388.5px;width:56px;height:11px;background:#474747;"></div>
<svg style="left:783.5px;top:390.5px" width="8" height="8" viewBox="0 0 8 8" ><circle cx="3.2" cy="3.2" r="2.4" fill="none" stroke="#ddd" stroke-width="1.1"/><path d="M5 5l2.4 2.4" stroke="#ddd" stroke-width="1.3"/></svg>
<div class="t" style="left:793px;top:392px;font-size:7.8px;color:#d6d6d6;transform:scaleX(0.961);">Kind</div>
<svg style="left:828.5px;top:393px" width="5" height="3" viewBox="0 0 5 3" ><path d="M0.5 0.5l2 2 2-2" fill="none" stroke="#999" stroke-width="0.9"/></svg>
<svg style="left:844px;top:390px" width="10" height="8" viewBox="0 0 10 8" ><rect x="0.5" y="0.5" width="9" height="7" fill="none" stroke="#d6d6d6" stroke-width="1"/><path d="M2 6l2-2.5 1.5 1.5 1.5-1.5L8 6z" fill="#d6d6d6"/></svg>
<svg style="left:859.5px;top:389px" width="9" height="9" viewBox="0 0 9 9" ><circle cx="4.5" cy="4.5" r="3.8" fill="none" stroke="#d6d6d6" stroke-width="1.2"/><path d="M4.5 0.7a3.8 3.8 0 0 1 0 7.6z" fill="#d6d6d6"/></svg>
<svg style="left:876px;top:389px" width="9" height="10" viewBox="0 0 9 10" ><path d="M0.5 1h8M4.5 1v8.5M3 9.5h3" stroke="#d6d6d6" stroke-width="1.4"/></svg>
<svg style="left:891.5px;top:389px" width="10" height="10" viewBox="0 0 10 10" ><rect x="1.5" y="1.5" width="7" height="7" fill="none" stroke="#d6d6d6" stroke-width="1.1"/><rect x="0" y="0" width="3" height="3" fill="#d6d6d6"/><rect x="7" y="0" width="3" height="3" fill="#d6d6d6"/><rect x="0" y="7" width="3" height="3" fill="#d6d6d6"/><rect x="7" y="7" width="3" height="3" fill="#d6d6d6"/></svg>
<svg style="left:909px;top:389px" width="8" height="10" viewBox="0 0 8 10" ><rect x="0" y="4.5" width="6" height="5" fill="#d6d6d6"/><path d="M2 4.5V3a2 2 0 0 1 4 0" fill="none" stroke="#d6d6d6" stroke-width="1.1"/><rect x="5" y="0.5" width="3" height="4" fill="#d6d6d6"/></svg>
<div class="a" style="left:923px;top:388px;width:7px;height:7px;border-radius:50%;background:#ececec"></div>
<div class="a" style="left:925.5px;top:395px;width:2px;height:3px;background:#666;"></div>
<div class="a" style="left:776px;top:402px;width:246px;height:1px;background:#4a4a4a;"></div>
<div class="a" style="left:779px;top:407px;width:84.3px;height:10.4px;background:#474747;"></div>
<div class="t" style="left:784.5px;top:410px;font-size:7.8px;color:#d6d6d6;transform:scaleX(0.855);">Normal</div>
<svg style="left:856.5px;top:411px" width="5" height="3" viewBox="0 0 5 3" ><path d="M0.5 0.5l2 2 2-2" fill="none" stroke="#999" stroke-width="0.9"/></svg>
<div class="t" style="left:868.7px;top:410px;font-size:7.8px;color:#bdbdbd;transform:scaleX(0.849);">Opacity:</div>
<div class="a" style="left:897px;top:407px;width:21px;height:10.4px;background:#474747;"></div>
<div class="t" style="left:898.5px;top:410px;font-size:7.8px;color:#e0e0e0;transform:scaleX(0.877);">100%</div>
<div class="a" style="left:920px;top:407px;width:9px;height:10.4px;background:#474747;"></div>
<svg style="left:922.5px;top:411px" width="5" height="3" viewBox="0 0 5 3" ><path d="M0.5 0.5l2 2 2-2" fill="none" stroke="#999" stroke-width="0.9"/></svg>
<div class="a" style="left:776px;top:419.5px;width:246px;height:1px;background:#4a4a4a;"></div>
<div class="t" style="left:779.7px;top:428px;font-size:7.8px;color:#bdbdbd;transform:scaleX(0.837);">Lock:</div>
<svg style="left:801.5px;top:425.5px" width="9" height="9" viewBox="0 0 9 9" ><rect x="0.5" y="0.5" width="8" height="8" fill="#e6e6e6"/><rect x="2" y="2" width="2" height="2" fill="#555"/><rect x="5" y="2" width="2" height="2" fill="#555"/><rect x="3.5" y="3.5" width="2" height="2" fill="#555"/><rect x="2" y="5" width="2" height="2" fill="#555"/><rect x="5" y="5" width="2" height="2" fill="#555"/></svg>
<svg style="left:816px;top:425px" width="10" height="10" viewBox="0 0 10 10" ><path d="M1 9.5c0-1.5 0.7-2.5 2-2.5l0.8 0.8C3.8 9 2.5 9.8 1 9.5z" fill="#e6e6e6"/><path d="M3.5 7L9 0.7" stroke="#e6e6e6" stroke-width="1.5"/></svg>
<svg style="left:830px;top:425px" width="10" height="10" viewBox="0 0 10 10" ><path d="M5 0.5v9M0.5 5h9" stroke="#e6e6e6" stroke-width="1"/><path d="M5 0L3.5 2h3zM5 10L3.5 8h3zM0 5l2-1.5v3zM10 5L8 3.5v3z" fill="#e6e6e6"/></svg>
<svg style="left:844.5px;top:425px" width="10" height="10" viewBox="0 0 10 10" ><path d="M2 0v8h8M0 2h6.5l2 2" fill="none" stroke="#e6e6e6" stroke-width="1.1"/></svg>
<svg style="left:860px;top:425px" width="9" height="10" viewBox="0 0 9 10" ><rect x="0.5" y="4.5" width="8" height="5.5" fill="#e6e6e6"/><path d="M2.3 4.5V3a2.2 2.2 0 0 1 4.4 0v1.5" fill="none" stroke="#e6e6e6" stroke-width="1.2"/><rect x="3.8" y="6.5" width="1.4" height="2" fill="#555"/></svg>
<div class="t" style="left:882.8px;top:428px;font-size:7.8px;color:#9a9a9a;transform:scaleX(0.906);">Fill:</div>
<div class="a" style="left:897px;top:426px;width:21px;height:9.3px;background:#474747;"></div>
<div class="t" style="left:898.5px;top:428px;font-size:7.8px;color:#e0e0e0;transform:scaleX(0.877);">100%</div>
<div class="a" style="left:920px;top:426px;width:9px;height:9.3px;background:#474747;"></div>
<svg style="left:922.5px;top:429.5px" width="5" height="3" viewBox="0 0 5 3" ><path d="M0.5 0.5l2 2 2-2" fill="none" stroke="#999" stroke-width="0.9"/></svg>
<div class="a" style="left:776px;top:439px;width:246px;height:1px;background:#4a4a4a;"></div>
<div class="a" style="left:796px;top:440.8px;width:217px;height:27px;background:#696969;"></div>
<div class="a" style="left:776px;top:467.8px;width:237px;height:1px;background:#454545;"></div>
<div class="a" style="left:776px;top:494.7px;width:237px;height:1px;background:#454545;"></div>
<div class="a" style="left:776px;top:521.7px;width:237px;height:1px;background:#454545;"></div>
<div class="a" style="left:795px;top:441px;width:1px;height:98px;background:#4c4c4c;"></div>
<div class="a" style="left:1013px;top:440px;width:9px;height:99px;background:#4a4a4a;"></div>
<svg style="left:1015px;top:446px" width="6" height="4" viewBox="0 0 6 4" ><path d="M0.5 3.5l2.5-2.5 2.5 2.5" fill="none" stroke="#777" stroke-width="0.9"/></svg>
<div class="a" style="left:1015px;top:453.3px;width:6px;height:4.7px;background:#7a7a7a;"></div>
<svg style="left:1015px;top:523px" width="6" height="4" viewBox="0 0 6 4" ><path d="M0.5 0.5l2.5 2.5 2.5-2.5" fill="none" stroke="#777" stroke-width="0.9"/></svg>
<svg style="left:781.5px;top:452px" width="9" height="6" viewBox="0 0 9 6" ><path d="M0.5 3C1.8 1 3.2 0.5 4.5 0.5S7.2 1 8.5 3C7.2 5 5.8 5.5 4.5 5.5S1.8 5 0.5 3z" fill="#e8e8e8"/><circle cx="4.5" cy="3" r="1.3" fill="#555"/></svg>
<svg style="left:781.5px;top:479px" width="9" height="6" viewBox="0 0 9 6" ><path d="M0.5 3C1.8 1 3.2 0.5 4.5 0.5S7.2 1 8.5 3C7.2 5 5.8 5.5 4.5 5.5S1.8 5 0.5 3z" fill="#e8e8e8"/><circle cx="4.5" cy="3" r="1.3" fill="#555"/></svg>
<svg style="left:781.5px;top:506px" width="9" height="6" viewBox="0 0 9 6" ><path d="M0.5 3C1.8 1 3.2 0.5 4.5 0.5S7.2 1 8.5 3C7.2 5 5.8 5.5 4.5 5.5S1.8 5 0.5 3z" fill="#e8e8e8"/><circle cx="4.5" cy="3" r="1.3" fill="#555"/></svg>
<div class="a" style="left:797px;top:442.7px;width:23.3px;height:24.1px;background:#575757;"></div>
<svg style="left:797px;top:442.7px" width="24" height="25" viewBox="0 0 24 25" ><path d="M0.5 5V0.5H5M18.5 0.5H23V5M23 19.5V24H18.5M5 24H0.5V19.5" fill="none" stroke="#e0e0e0" stroke-width="1"/><path d="M0.5 5V19.5M5 0.5H18.5M23 5V19.5M5 24H18.5" fill="none" stroke="#8a8a8a" stroke-width="0.6"/></svg>
<div class="a" style="left:803px;top:449px;width:13px;height:13px;background:;background-color:#f4f4f4;background-image:linear-gradient(45deg,#cfcfcf 25%,transparent 25%,transparent 75%,#cfcfcf 75%),linear-gradient(45deg,#cfcfcf 25%,transparent 25%,transparent 75%,#cfcfcf 75%);background-size:4px 4px;background-position:0 0,2px 2px"></div>
<div class="a" style="left:810px;top:457px;width:8px;height:8px;background:#5e5e5e;border:1px solid #ddd"></div>
<div class="a" style="left:812px;top:459px;width:4px;height:4px;background:#ddd;"></div>
<div class="t" style="left:824.7px;top:452px;font-size:7.8px;color:#ececec;transform:scaleX(0.834);">Layer 57</div>
<div class="a" style="left:798px;top:470px;width:21px;height:22px;background:#4a4a4a;"></div>
<div class="a" style="left:803px;top:475.5px;width:12.5px;height:13.5px;background:#ffffff;"></div>
<div class="t" style="left:824.7px;top:479px;font-size:7.8px;color:#ececec;transform:scaleX(0.834);">Layer 58</div>
<svg style="left:995.5px;top:478.5px" width="7" height="8" viewBox="0 0 7 8" ><rect x="0" y="3.2" width="7" height="4.8" fill="#e6e6e6"/><path d="M1.5 3.2V2.2a2 2 0 0 1 4 0v1" fill="none" stroke="#e6e6e6" stroke-width="1.1"/></svg>
<div class="a" style="left:798px;top:497px;width:21px;height:22px;background:#4a4a4a;"></div>
<div class="a" style="left:802.5px;top:502px;width:13px;height:13px;background:#c9a28f;"></div>
<div class="a" style="left:805px;top:503px;width:7px;height:11px;background:#a45b4c;"></div>
<div class="a" style="left:806px;top:505px;width:5px;height:7px;background:#e3c1ad;"></div>
<div class="t" style="left:824.7px;top:506px;font-size:7.8px;color:#ececec;transform:scaleX(0.834);">Layer 56</div>
<div class="a" style="left:798px;top:524px;width:21px;height:15px;background:#4a4a4a;"></div>
<div class="a" style="left:802px;top:527px;width:13px;height:3px;background:#777;"></div>
<div class="a" style="left:776px;top:531px;width:246px;height:8px;background:#4f4f4f;"></div>
<svg style="left:889px;top:535px" width="9" height="9" viewBox="0 0 9 9" ><path d="M0 3h6" stroke="#ccc" stroke-width="1"/></svg>
<svg style="left:908px;top:535px" width="9" height="9" viewBox="0 0 9 9" ><text x="0" y="7" font-size="7" fill="#ccc" font-style="italic" font-family="Liberation Serif">fx</text></svg>
<svg style="left:926px;top:535px" width="9" height="9" viewBox="0 0 9 9" ><rect x="0" y="1" width="8" height="7" fill="#ccc"/><circle cx="4" cy="4.5" r="2" fill="#4f4f4f"/></svg>
<svg style="left:944px;top:535px" width="9" height="9" viewBox="0 0 9 9" ><circle cx="4" cy="4.5" r="3.5" fill="none" stroke="#ccc"/></svg>
<svg style="left:961px;top:535px" width="9" height="9" viewBox="0 0 9 9" ><path d="M0 1h3l1 1h5v6H0z" fill="#ccc"/></svg>
<svg style="left:980px;top:535px" width="9" height="9" viewBox="0 0 9 9" ><rect x="0.5" y="1.5" width="7" height="7" fill="none" stroke="#ccc"/></svg>
<svg style="left:997px;top:535px" width="9" height="9" viewBox="0 0 9 9" ><path d="M1 2h7l-0.7 7H1.7z" fill="#ccc"/></svg>
<svg style="left:33px;top:474px" width="9" height="7" viewBox="0 0 9 7" ><rect x="0" y="0.5" width="1.6" height="6" fill="#d8d8d8"/><path d="M8 0.5v6L2.5 3.5z" fill="#d8d8d8"/></svg>
<svg style="left:53px;top:474px" width="9" height="7" viewBox="0 0 9 7" ><path d="M6 0.5v6L0.5 3.5z" fill="#d8d8d8"/><rect x="7" y="0.5" width="1.6" height="6" fill="#d8d8d8"/></svg>
<svg style="left:75px;top:473px" width="7" height="9" viewBox="0 0 7 9" ><path d="M0.5 0.5v8l6-4z" fill="#d8d8d8"/></svg>
<svg style="left:95px;top:474px" width="9" height="7" viewBox="0 0 9 7" ><rect x="0" y="0.5" width="1.6" height="6" fill="#d8d8d8"/><path d="M2.5 0.5v6L8 3.5z" fill="#d8d8d8"/></svg>
<div class="a" style="left:111px;top:471px;width:17px;height:16px;background:#3b3b3b;"></div>
<svg style="left:115px;top:474px" width="10" height="9" viewBox="0 0 10 9" ><path d="M0 3h2l3-2.5v8L2 6H0z" fill="#d8d8d8"/><path d="M7 2.5c1 1 1 3 0 4" fill="none" stroke="#d8d8d8" stroke-width="0.9"/></svg>
<svg style="left:137px;top:474px" width="10" height="10" viewBox="0 0 10 10" ><circle cx="4.5" cy="4" r="2.8" fill="none" stroke="#d8d8d8" stroke-width="1.6"/><path d="M4.5 0v1.5M4.5 6.5V8M0.5 4H2M7 4h1.5" stroke="#d8d8d8" stroke-width="1.2"/><rect x="8" y="8" width="1.2" height="1.2" fill="#d8d8d8"/></svg>
<div class="a" style="left:153px;top:468px;width:1px;height:20px;background:#484848;"></div>
<svg style="left:160px;top:472px" width="12" height="11" viewBox="0 0 12 11" ><circle cx="2.5" cy="2.5" r="1.8" fill="none" stroke="#d8d8d8" stroke-width="1.1"/><circle cx="2.5" cy="8.5" r="1.8" fill="none" stroke="#d8d8d8" stroke-width="1.1"/><path d="M4 3.5l7.5 5M4 7.5l7.5-5" stroke="#d8d8d8" stroke-width="1.1"/></svg>
<svg style="left:182px;top:472px" width="11" height="11" viewBox="0 0 11 11" ><rect x="0.6" y="0.6" width="9.8" height="9.8" fill="none" stroke="#d8d8d8" stroke-width="1.1"/><path d="M10.4 0.6v9.8H0.6z" fill="#d8d8d8"/></svg>
<svg style="left:34px;top:501px" width="4" height="7" viewBox="0 0 4 7" ><path d="M0.5 0.5l2.5 3-2.5 3" fill="none" stroke="#aaa" stroke-width="0.9"/></svg>
<div class="t" style="left:45px;top:502px;font-size:7.8px;color:#f0f0f0;font-weight:bold;transform:scaleX(0.853);">Layer 57</div>
<svg style="left:183px;top:500px" width="9" height="10" viewBox="0 0 9 10" ><rect x="0.5" y="0.5" width="7" height="9" fill="#ddd"/><rect x="2.5" y="1.5" width="3" height="3" fill="#696969"/><rect x="2.5" y="5.5" width="3" height="3" fill="#696969"/></svg>
<div class="a" style="left:192px;top:501px;width:6px;height:7px;background:#555;"></div>
<svg style="left:34px;top:527px" width="4" height="7" viewBox="0 0 4 7" ><path d="M0.5 0.5l2.5 3-2.5 3" fill="none" stroke="#aaa" stroke-width="0.9"/></svg>
<div class="t" style="left:45px;top:529px;font-size:7.8px;color:#d0d0d0;transform:scaleX(0.890);">Layer 58</div>
<svg style="left:183px;top:527px" width="9" height="8" viewBox="0 0 9 8" ><rect x="0.5" y="0.5" width="7" height="8" fill="#ccc"/><rect x="2.5" y="1.5" width="3" height="3" fill="#4d4d4d"/></svg>
<div class="a" style="left:192px;top:530px;width:6px;height:2px;background:#777;"></div>
<div class="t" style="left:244.6px;top:468px;font-size:7.4px;color:#cfcfcf;transform:scaleX(0.982);">04f</div>
<div class="t" style="left:298px;top:468px;font-size:7.4px;color:#cfcfcf;transform:scaleX(0.875);">08f</div>
<div class="t" style="left:345.7px;top:468px;font-size:7.4px;color:#cfcfcf;transform:scaleX(0.939);">01:00f</div>
<div class="t" style="left:403.3px;top:468px;font-size:7.4px;color:#cfcfcf;transform:scaleX(0.973);">04f</div>
<div class="t" style="left:457.3px;top:468px;font-size:7.4px;color:#cfcfcf;transform:scaleX(0.875);">08f</div>
<div class="t" style="left:505.8px;top:468px;font-size:7.4px;color:#cfcfcf;transform:scaleX(0.909);">02:00f</div>
<div class="t" style="left:563px;top:468px;font-size:7.4px;color:#cfcfcf;transform:scaleX(0.973);">04f</div>
<div class="t" style="left:616.6px;top:468px;font-size:7.4px;color:#cfcfcf;transform:scaleX(0.914);">08f</div>
<div class="t" style="left:664.5px;top:468px;font-size:7.4px;color:#cfcfcf;transform:scaleX(0.900);">03:00f</div>
<div class="a" style="left:249.5px;top:477px;width:1px;height:3px;background:#636363;"></div>
<div class="a" style="left:302.5px;top:477px;width:1px;height:3px;background:#636363;"></div>
<div class="a" style="left:355.5px;top:477px;width:1px;height:3px;background:#636363;"></div>
<div class="a" style="left:408.5px;top:477px;width:1px;height:3px;background:#636363;"></div>
<div class="a" style="left:462px;top:477px;width:1px;height:3px;background:#636363;"></div>
<div class="a" style="left:515px;top:477px;width:1px;height:3px;background:#636363;"></div>
<div class="a" style="left:568px;top:477px;width:1px;height:3px;background:#636363;"></div>
<div class="a" style="left:621.5px;top:477px;width:1px;height:3px;background:#636363;"></div>
<div class="a" style="left:674px;top:477px;width:1px;height:3px;background:#636363;"></div>
<svg style="left:205px;top:480px" width="5" height="11" viewBox="0 0 5 11" ><rect x="0.5" y="0.5" width="4" height="10" rx="1" fill="#3a3a3a" stroke="#cfcfcf" stroke-width="1"/><rect x="1.5" y="3" width="2" height="2" fill="#cfcfcf"/><rect x="1.5" y="6" width="2" height="2" fill="#cfcfcf"/></svg>
<svg style="left:673px;top:480px" width="5" height="11" viewBox="0 0 5 11" ><rect x="0.5" y="0.5" width="4" height="10" rx="1" fill="#3a3a3a" stroke="#cfcfcf" stroke-width="1"/><rect x="1.5" y="3" width="2" height="2" fill="#cfcfcf"/><rect x="1.5" y="6" width="2" height="2" fill="#cfcfcf"/></svg>
<div class="a" style="left:407px;top:489.5px;width:67px;height:1.5px;background:#5f8a70;"></div>
<div class="a" style="left:487px;top:489.5px;width:120px;height:1.5px;background:#5f8a70;"></div>
<div class="a" style="left:210px;top:492px;width:476px;height:25.5px;background:#4f6f9a;border:1.5px solid #e8eef6;border-radius:3px"></div>
<div class="a" style="left:216px;top:497px;width:14px;height:15px;background:;background-color:#eeeeee;background-image:linear-gradient(45deg,#cfcfcf 25%,transparent 25%,transparent 75%,#cfcfcf 75%),linear-gradient(45deg,#cfcfcf 25%,transparent 25%,transparent 75%,#cfcfcf 75%);background-size:4px 4px;background-position:0 0,2px 2px"></div>
<svg style="left:237px;top:495px" width="4" height="7" viewBox="0 0 4 7" ><path d="M0.5 0.5l2.5 3-2.5 3" fill="none" stroke="#c8d4e6" stroke-width="0.9"/></svg>
<div class="t" style="left:247.4px;top:495px;font-size:7.8px;color:#ffffff;font-weight:bold;transform:scaleX(0.872);">Layer 57</div>
<svg style="left:678px;top:494.5px" width="7" height="7" viewBox="0 0 7 7" ><rect x="0.5" y="0.5" width="6" height="6" fill="#7a94ba" stroke="#dfe6f0"/><path d="M2.5 1.8v3.4l2.4-1.7z" fill="#fff"/></svg>
<div class="a" style="left:210px;top:519.4px;width:490px;height:15.2px;background:#7b5cb0;border-radius:2px"></div>
<div class="a" style="left:216px;top:523px;width:14px;height:12px;background:#ffffff;"></div>
<svg style="left:237px;top:522px" width="4" height="7" viewBox="0 0 4 7" ><path d="M0.5 0.5l2.5 3-2.5 3" fill="none" stroke="#d0c4e6" stroke-width="0.9"/></svg>
<div class="t" style="left:247.4px;top:522px;font-size:7.8px;color:#e6ddf2;transform:scaleX(0.844);">Layer 58</div>
<svg style="left:692px;top:521px" width="7" height="7" viewBox="0 0 7 7" ><rect x="0.5" y="0.5" width="6" height="6" fill="#9a82c4" stroke="#e6dff0"/><path d="M2.5 1.8v3.4l2.4-1.7z" fill="#fff"/></svg>
<div class="a" style="left:27px;top:535px;width:711px;height:1px;background:#3a3a3a;"></div>
<div class="a" style="left:27px;top:536px;width:711px;height:3px;background:#4a4a4a;"></div>
<div class="a" style="left:226px;top:536px;width:371px;height:3px;background:#5c5c5c;"></div>
<svg style="left:496px;top:468px" width="10" height="11" viewBox="0 0 10 11" ><path d="M1 1h8v6l-4 3.5L1 7z" fill="#3d86d6" stroke="#9cc4f0" stroke-width="1"/><path d="M3 4h4" stroke="#fff" stroke-width="0.8"/></svg>
<div class="a" style="left:500.5px;top:479px;width:1px;height:60px;background:#d8313a;"></div>
<svg style="left:723px;top:500px" width="9" height="9" viewBox="0 0 9 9" ><path d="M4.5 0.5v8M0.5 4.5h8" stroke="#e6e6e6" stroke-width="1.5"/></svg>
<svg style="left:723px;top:528px" width="9" height="9" viewBox="0 0 9 9" ><path d="M4.5 0.5v8M0.5 4.5h8" stroke="#e6e6e6" stroke-width="1.5"/></svg>
<div class="a" style="left:737.5px;top:490px;width:9px;height:49px;background:#4a4a4a;"></div>
<div class="a" style="left:738.5px;top:502.5px;width:7px;height:6px;background:#757575;"></div>
<svg style="left:739px;top:496px" width="6" height="4" viewBox="0 0 6 4" ><path d="M0.5 3.5l2.5-2.5 2.5 2.5" fill="none" stroke="#6a6a6a" stroke-width="0.9"/></svg>
<svg style="left:739px;top:526px" width="6" height="4" viewBox="0 0 6 4" ><path d="M0.5 0.5l2.5 2.5 2.5-2.5" fill="none" stroke="#6a6a6a" stroke-width="0.9"/></svg>
<svg style="left:0;top:0" width="1024" height="539" viewBox="0 0 1024 539"><defs><clipPath id="doc"><rect x="233" y="86" width="298" height="321"/></clipPath></defs><g clip-path="url(#doc)"><path d="M325 165 C324 161 328 159 333 160 C338 160 342 158 347 157 C352 155 356 154 362 154" stroke="#3a3a3a" stroke-width="0.75" fill="none" stroke-opacity="1" stroke-linecap="round"/><path d="M325 166 C318 168 310 171 304 177 C299 184 296 192 296 198 C296 202 298 206 300 208" stroke="#1c1c1c" stroke-width="0.9" fill="none" stroke-opacity="1" stroke-linecap="round"/><path d="M302 180 C305 186 305 192 304 198 C304 203 304 206 305 209" stroke="#3a3a3a" stroke-width="0.7" fill="none" stroke-opacity="1" stroke-linecap="round"/><path d="M362 154 C376 152 392 154 404 158 C414 162 420 168 426 176 C432 184 438 188 446 196 C454 200 458 202 463 205" stroke="#1c1c1c" stroke-width="0.85" fill="none" stroke-opacity="1" stroke-linecap="round"/><path d="M386 157 C400 160 412 162 420 172 C426 180 430 184 435 186" stroke="#1c1c1c" stroke-width="0.9" fill="none" stroke-opacity="1" stroke-linecap="round"/><path d="M305 205 C300 192 304 180 316 173 C326 168 336 168 342 172" stroke="#1c1c1c" stroke-width="0.85" fill="none" stroke-opacity="1" stroke-linecap="round"/><path d="M310 206 C304 194 308 184 318 178 C328 173 338 174 344 180 C347 184 346 190 342 194" stroke="#1c1c1c" stroke-width="0.85" fill="none" stroke-opacity="1" stroke-linecap="round"/><path d="M316 208 C310 198 314 188 324 184 C332 181 340 184 342 190" stroke="#1c1c1c" stroke-width="0.85" fill="none" stroke-opacity="1" stroke-linecap="round"/><path d="M300 200 C296 186 302 176 312 170 C320 166 330 165 336 166" stroke="#1c1c1c" stroke-width="0.85" fill="none" stroke-opacity="1" stroke-linecap="round"/><path d="M322 210 C318 202 322 194 330 192 C338 190 344 194 344 200" stroke="#1c1c1c" stroke-width="0.85" fill="none" stroke-opacity="1" stroke-linecap="round"/><path d="M304 212 C312 212 320 210 326 206" stroke="#1c1c1c" stroke-width="0.85" fill="none" stroke-opacity="1" stroke-linecap="round"/><path d="M300 206 C306 214 318 216 328 212" stroke="#1c1c1c" stroke-width="0.85" fill="none" stroke-opacity="1" stroke-linecap="round"/><path d="M350 168 C356 172 360 178 362 184" stroke="#1c1c1c" stroke-width="0.85" fill="none" stroke-opacity="1" stroke-linecap="round"/><path d="M334 176 C342 182 346 190 346 198" stroke="#1c1c1c" stroke-width="0.85" fill="none" stroke-opacity="1" stroke-linecap="round"/><path d="M312 190 C318 196 326 198 334 196" stroke="#1c1c1c" stroke-width="0.85" fill="none" stroke-opacity="1" stroke-linecap="round"/><path d="M312 226 C318 230 324 232 330 230" stroke="#1c1c1c" stroke-width="1.0" fill="none" stroke-opacity="1" stroke-linecap="round"/><path d="M313 231 C319 235 325 236 331 234" stroke="#1c1c1c" stroke-width="1.0" fill="none" stroke-opacity="1" stroke-linecap="round"/><path d="M310 218 C316 222 322 224 330 222" stroke="#3a3a3a" stroke-width="0.8" fill="none" stroke-opacity="1" stroke-linecap="round"/><path d="M360.6 160 C362 165 368 170 374 171 C382 175 385 184 380 191 C378 194 374 195 371 193" stroke="#1c1c1c" stroke-width="0.9" fill="none" stroke-opacity="1" stroke-linecap="round"/><path d="M371.7 160 C378 163 386 168 389 178 C390 186 386 193 381 196 C378 198 376 198 375 196" stroke="#1c1c1c" stroke-width="0.9" fill="none" stroke-opacity="1" stroke-linecap="round"/><path d="M384 158.6 C394 163 402 170 405 180 C407 189 404 195 398 197 C395 198 392 197 391 195" stroke="#1c1c1c" stroke-width="0.9" fill="none" stroke-opacity="1" stroke-linecap="round"/><path d="M386 157 C396 159 408 162 413 165 C418 170 422 176 426 181 C430 184 433 185 435 186" stroke="#1c1c1c" stroke-width="0.9" fill="none" stroke-opacity="1" stroke-linecap="round"/><path d="M402.8 157 C410 160 416 164 421.7 172.4" stroke="#1c1c1c" stroke-width="0.9" fill="none" stroke-opacity="1" stroke-linecap="round"/><path d="M355 173.6 C362 176 368 182 369 188 C370 193 366 195 360 195" stroke="#1c1c1c" stroke-width="0.9" fill="none" stroke-opacity="1" stroke-linecap="round"/><path d="M355 180 C360 183 364 188 361 192 C359 194 357 194 356 193" stroke="#1c1c1c" stroke-width="0.9" fill="none" stroke-opacity="1" stroke-linecap="round"/><path d="M346 176 C352 180 355 188 352 196 C351 199 349 200 347 199" stroke="#1c1c1c" stroke-width="0.9" fill="none" stroke-opacity="1" stroke-linecap="round"/><path d="M394 168 C400 174 401 182 397 188" stroke="#1c1c1c" stroke-width="0.9" fill="none" stroke-opacity="1" stroke-linecap="round"/><path d="M364 174 C371 180 374 188 370 195" stroke="#1c1c1c" stroke-width="0.9" fill="none" stroke-opacity="1" stroke-linecap="round"/><path d="M410.6 181.3 C413 188 415 196 417 208" stroke="#1c1c1c" stroke-width="0.9" fill="none" stroke-opacity="1" stroke-linecap="round"/><path d="M414 166 C418 172 420 180 418 190 C417 194 415 196 412 196" stroke="#1c1c1c" stroke-width="0.9" fill="none" stroke-opacity="1" stroke-linecap="round"/><path d="M340 186 C346 190 348 198 344 204" stroke="#1c1c1c" stroke-width="0.9" fill="none" stroke-opacity="1" stroke-linecap="round"/><path d="M415 170 C418 176 422 180 426 184 C430 187 434 188 438.6 188.2" stroke="#1c1c1c" stroke-width="0.85" fill="none" stroke-opacity="1" stroke-linecap="round"/><path d="M411 177.8 C414 182 418 186 424 188 C430 190 436 190 440 190" stroke="#1c1c1c" stroke-width="0.85" fill="none" stroke-opacity="1" stroke-linecap="round"/><path d="M433.4 196 C440 198 448 201 463.3 205" stroke="#1c1c1c" stroke-width="0.85" fill="none" stroke-opacity="1" stroke-linecap="round"/><path d="M434.7 202.5 C442 206 450 208 462 205" stroke="#1c1c1c" stroke-width="0.85" fill="none" stroke-opacity="1" stroke-linecap="round"/><path d="M436 209 C440 212 446 213 451.6 211.6" stroke="#1c1c1c" stroke-width="0.85" fill="none" stroke-opacity="1" stroke-linecap="round"/><path d="M438.6 218 C442 221 446 222 451.6 222.6" stroke="#1c1c1c" stroke-width="0.85" fill="none" stroke-opacity="1" stroke-linecap="round"/><path d="M412.6 192 C410 198 410 206 417.8 211.6 C421 212 424 211 426.9 210.3" stroke="#1c1c1c" stroke-width="0.85" fill="none" stroke-opacity="1" stroke-linecap="round"/><path d="M417.8 212.9 C419 222 420 232 420.4 240" stroke="#1c1c1c" stroke-width="0.85" fill="none" stroke-opacity="1" stroke-linecap="round"/><path d="M427 209 C425 216 424 222 424.3 224.5 C426 230 429 236 430.8 240" stroke="#1c1c1c" stroke-width="0.85" fill="none" stroke-opacity="1" stroke-linecap="round"/><path d="M433.4 198.6 C434 210 433 216 433.4 222 C434 230 435 236 436 240" stroke="#1c1c1c" stroke-width="0.85" fill="none" stroke-opacity="1" stroke-linecap="round"/><path d="M436 212.9 C440 218 443 222 445 224.5 C448 230 450 236 451.6 240" stroke="#1c1c1c" stroke-width="0.85" fill="none" stroke-opacity="1" stroke-linecap="round"/><path d="M305 239.5 C301 243 298 247 296.7 250.6 C294 255 292 259 289.7 261.8" stroke="#1c1c1c" stroke-width="0.8" fill="none" stroke-opacity="1" stroke-linecap="round"/><path d="M296.7 275.7 C292 282 290 288 288.4 292.4 C286 300 285 306 285.6 312 C286 320 287 326 288.4 331.4 C290 336 293 340 296.7 342.6" stroke="#1c1c1c" stroke-width="0.9" fill="none" stroke-opacity="1" stroke-linecap="round"/><path d="M321.8 234 C324 248 326 262 327.4 275.7 C330 290 336 302 344 312 C350 322 356 330 360.8 337 C362 342 361 348 358 351" stroke="#1c1c1c" stroke-width="0.8" fill="none" stroke-opacity="1" stroke-linecap="round"/><path d="M305 232 C308 246 308 260 304 274 C300 290 298 306 302 322 C306 336 312 346 322 354" stroke="#1c1c1c" stroke-width="0.8" fill="none" stroke-opacity="1" stroke-linecap="round"/><path d="M312 234 C316 250 318 266 314 282 C310 298 310 314 316 330 C320 340 326 348 334 356" stroke="#1c1c1c" stroke-width="0.8" fill="none" stroke-opacity="1" stroke-linecap="round"/><path d="M318 244 C322 258 324 272 322 288 C320 304 322 320 330 334 C336 344 344 352 352 358" stroke="#1c1c1c" stroke-width="0.8" fill="none" stroke-opacity="1" stroke-linecap="round"/><path d="M300 256 C296 270 294 284 296 300 C298 316 300 330 306 342" stroke="#1c1c1c" stroke-width="0.8" fill="none" stroke-opacity="1" stroke-linecap="round"/><path d="M326 250 C330 266 332 282 332 296 C332 312 338 326 348 338" stroke="#1c1c1c" stroke-width="0.8" fill="none" stroke-opacity="1" stroke-linecap="round"/><path d="M296 300 C292 314 292 330 298 344 C302 352 310 358 318 362" stroke="#1c1c1c" stroke-width="0.8" fill="none" stroke-opacity="1" stroke-linecap="round"/><path d="M330 300 C336 314 344 324 352 330 C358 334 362 340 362 346" stroke="#1c1c1c" stroke-width="0.8" fill="none" stroke-opacity="1" stroke-linecap="round"/><path d="M306 300 C310 316 318 330 328 342 C334 350 340 356 344 362" stroke="#1c1c1c" stroke-width="0.8" fill="none" stroke-opacity="1" stroke-linecap="round"/><path d="M290 320 C294 334 302 346 312 354" stroke="#1c1c1c" stroke-width="0.8" fill="none" stroke-opacity="1" stroke-linecap="round"/><path d="M336 320 C338 332 342 342 350 350" stroke="#1c1c1c" stroke-width="0.8" fill="none" stroke-opacity="1" stroke-linecap="round"/><path d="M316 264 C312 280 306 296 304 312" stroke="#1c1c1c" stroke-width="0.8" fill="none" stroke-opacity="1" stroke-linecap="round"/><path d="M298 342 C304 348 310 352 318 354" stroke="#1c1c1c" stroke-width="0.8" fill="none" stroke-opacity="1" stroke-linecap="round"/><path d="M286 316 C288 330 294 340 300 346" stroke="#1c1c1c" stroke-width="0.8" fill="none" stroke-opacity="1" stroke-linecap="round"/><path d="M278 322 C276 326 274 330 272 332" stroke="#666" stroke-width="0.5" fill="none" stroke-opacity="1" stroke-linecap="round"/><path d="M282 326 C280 330 278 334 276 336" stroke="#666" stroke-width="0.5" fill="none" stroke-opacity="1" stroke-linecap="round"/><path d="M420.6 225.6 C426 236 430 246 431.8 256 C428 266 420 276 417.9 284 C418 296 419 308 420.6 317.5 C424 326 430 332 434.6 337" stroke="#1c1c1c" stroke-width="0.8" fill="none" stroke-opacity="1" stroke-linecap="round"/><path d="M434.6 220 C438 228 442 236 445.7 242.3 C452 252 458 260 462.4 267.4 C464 274 466 282 465.2 286.9 C464 290 462 292 459.6 292.4" stroke="#1c1c1c" stroke-width="0.8" fill="none" stroke-opacity="1" stroke-linecap="round"/><path d="M440 253.4 C446 266 452 280 454 292.4 C456 302 458 310 459.6 317.5 C459 322 457 326 454 328.6" stroke="#1c1c1c" stroke-width="0.8" fill="none" stroke-opacity="1" stroke-linecap="round"/><path d="M425 240 C432 252 438 266 440 280 C442 296 444 312 446 326" stroke="#1c1c1c" stroke-width="0.8" fill="none" stroke-opacity="1" stroke-linecap="round"/><path d="M430 270 C434 284 438 298 440 312 C442 322 444 330 448 336" stroke="#1c1c1c" stroke-width="0.8" fill="none" stroke-opacity="1" stroke-linecap="round"/><path d="M406.7 320 C404 326 403 330 404 334.2 C407 340 410 345 415 348 C422 351 430 351 437.4 351" stroke="#1c1c1c" stroke-width="0.8" fill="none" stroke-opacity="1" stroke-linecap="round"/><path d="M412 316 C410 326 412 336 420 344" stroke="#1c1c1c" stroke-width="0.8" fill="none" stroke-opacity="1" stroke-linecap="round"/><path d="M445.7 331.4 C452 333 458 334 465.2 334.2" stroke="#1c1c1c" stroke-width="0.8" fill="none" stroke-opacity="1" stroke-linecap="round"/><path d="M448 300 C452 312 456 324 456 336" stroke="#1c1c1c" stroke-width="0.8" fill="none" stroke-opacity="1" stroke-linecap="round"/><path d="M436 300 C440 314 444 326 444 340" stroke="#1c1c1c" stroke-width="0.8" fill="none" stroke-opacity="1" stroke-linecap="round"/><path d="M424 300 C426 314 430 326 436 340" stroke="#1c1c1c" stroke-width="0.8" fill="none" stroke-opacity="1" stroke-linecap="round"/><path d="M468 238 C469 240 470 242 470 244" stroke="#666" stroke-width="0.5" fill="none" stroke-opacity="1" stroke-linecap="round"/><path d="M472 246 C473 248 473 250 472 252" stroke="#666" stroke-width="0.5" fill="none" stroke-opacity="1" stroke-linecap="round"/><path d="M328.7 223.6 C329 236 330 250 330.6 260.7 C333 270 336 278 339.8 283 C344 292 348 300 352.8 305 C358 310 364 314 370 314.7 C378 314.5 386 313 390 311 C394 308 397 304 399.2 301.5 C404 294 409 286 412.2 279.2 C416 270 418 260 417.8 251.4 C418 240 417 228 416 220" stroke="#1c1c1c" stroke-width="0.9" fill="none" stroke-opacity="1" stroke-linecap="round"/><path d="M336 223.6 C344 222 352 223 358.4 225.4" stroke="#666" stroke-width="0.5" fill="none" stroke-opacity="1" stroke-linecap="round"/><path d="M377 219 C384 216 392 214 399 213.3" stroke="#666" stroke-width="0.5" fill="none" stroke-opacity="1" stroke-linecap="round"/><path d="M336 232.8 C340 229 344 227.3 347 227.3 C352 227 356 229 358.4 231" stroke="#1c1c1c" stroke-width="0.9" fill="none" stroke-opacity="1" stroke-linecap="round"/><path d="M337 234 C342 236.5 350 237.5 357 234" stroke="#666" stroke-width="0.5" fill="none" stroke-opacity="1" stroke-linecap="round"/><path d="M378.8 229 C384 226 388 224.5 391.8 224.5 C397 224 402 225 406.6 227.3" stroke="#1c1c1c" stroke-width="0.9" fill="none" stroke-opacity="1" stroke-linecap="round"/><path d="M380 231 C386 235 396 236 405 230" stroke="#666" stroke-width="0.5" fill="none" stroke-opacity="1" stroke-linecap="round"/><path d="M384 232.8 C387 236 390 238 393.6 239.3" stroke="#666" stroke-width="0.5" fill="none" stroke-opacity="1" stroke-linecap="round"/><ellipse cx="346.3" cy="233" rx="2.2" ry="1.8" fill="#444"/><ellipse cx="392.7" cy="228" rx="2.2" ry="1.8" fill="#444"/><path d="M369.5 225.4 C369 232 368.6 238 368.6 242" stroke="#666" stroke-width="0.5" fill="none" stroke-opacity="1" stroke-linecap="round"/><path d="M356.5 255 C355 252 357 249 360 250 C362 251 363 252 364 253 C367 256 372 256 376 255 C380 254 382 252 384.4 253 C386 255 385 258 382 258" stroke="#1c1c1c" stroke-width="0.8" fill="none" stroke-opacity="1" stroke-linecap="round"/><path d="M358 258 C362 258 364 257 366 256" stroke="#3a3a3a" stroke-width="0.6" fill="none" stroke-opacity="1" stroke-linecap="round"/><circle cx="375" cy="249.5" r="0.9" fill="#555"/><path d="M368.6 264.4 C368 268 368.6 271.8 368.6 271.8" stroke="#666" stroke-width="0.5" fill="none" stroke-opacity="1" stroke-linecap="round"/><path d="M374.2 264 C375 268 374 272 374 272" stroke="#666" stroke-width="0.5" fill="none" stroke-opacity="1" stroke-linecap="round"/><path d="M358.4 281 C362 279 366 276 369.5 275.5 C373 275 377 276 380.7 276.4 C384 277 387 278 390 280" stroke="#1c1c1c" stroke-width="0.85" fill="none" stroke-opacity="1" stroke-linecap="round"/><path d="M358 283 C366 284 380 283.5 390 281" stroke="#1c1c1c" stroke-width="1.0" fill="none" stroke-opacity="1" stroke-linecap="round"/><path d="M364 286.6 C368 288.5 373 289.4 377 289.4 C381 289 384 288 386 286.6" stroke="#3a3a3a" stroke-width="0.6" fill="none" stroke-opacity="1" stroke-linecap="round"/><path d="M366 283.5 C370 285 376 285 382 283.5" stroke="#333" stroke-width="0.8" fill="none" stroke-opacity="1" stroke-linecap="round"/><path d="M364 292 C368 295 378 296 384 293" stroke="#666" stroke-width="0.4" fill="none" stroke-opacity="1" stroke-linecap="round"/><path d="M396 280 C398 286 398 292 396 296" stroke="#666" stroke-width="0.4" fill="none" stroke-opacity="1" stroke-linecap="round"/><path d="M233.3 383.4 C238 376 242 371 245 368.4 C250 363 256 359 261.7 356.7 C272 350 284 344 295 340" stroke="#1c1c1c" stroke-width="0.8" fill="none" stroke-opacity="1" stroke-linecap="round"/><path d="M235 386 C240 378 244 373 248 370 C254 365 260 361 266 358 C276 352 286 347 297 343" stroke="#3a3a3a" stroke-width="0.6" fill="none" stroke-opacity="1" stroke-linecap="round"/><path d="M288.4 345 C294 350 298 354 301.8 356.7 C306 362 310 368 315 373.4 C318 378 322 383 325 386.8 C330 392 334 394 340 397 C350 402 360 404 370 404" stroke="#1c1c1c" stroke-width="0.85" fill="none" stroke-opacity="1" stroke-linecap="round"/><path d="M298 348 C306 356 312 362 318 370 C324 378 330 386 338 392" stroke="#3a3a3a" stroke-width="0.6" fill="none" stroke-opacity="1" stroke-linecap="round"/><path d="M454.5 351 C451 358 448 364 446 369 C440 378 434 384 430 389.8 C420 396 410 400 400 402.5 C390 404 380 405 370 404" stroke="#1c1c1c" stroke-width="0.85" fill="none" stroke-opacity="1" stroke-linecap="round"/><path d="M446 347 C452 348 456 348 460.6 349 C468 352 474 355 481 359 C486 364 490 370 495 377.6 C500 386 504 394 508.6 404" stroke="#1c1c1c" stroke-width="0.85" fill="none" stroke-opacity="1" stroke-linecap="round"/><path d="M448 351 C456 352 462 353 468 356 C476 360 482 364 486 370 C492 378 498 388 502 396 C504 400 506 404 507 407" stroke="#3a3a3a" stroke-width="0.6" fill="none" stroke-opacity="1" stroke-linecap="round"/><path d="M340 398 C352 404 364 407 378 406" stroke="#222" stroke-width="1.1" fill="none" stroke-opacity="1" stroke-linecap="round"/><path d="M300.0 236.0 C300.3 237.2 301.7 241.0 302.1 243.5 C302.4 245.9 302.6 248.4 302.2 250.7 C301.8 253.1 300.8 255.4 299.7 257.6 C298.6 259.9 296.9 262.1 295.6 264.3 C294.4 266.6 292.9 268.8 292.1 271.1 C291.3 273.4 290.9 275.8 290.9 278.2 C290.9 280.6 291.6 283.1 292.2 285.6 C292.8 288.1 293.9 290.6 294.5 293.1 C295.1 295.6 295.6 299.2 295.8 300.5" stroke="#2a2a2a" stroke-width="0.75" fill="none" stroke-opacity="1" stroke-linecap="round"/><path d="M292.0 270.0 C292.7 271.1 295.1 274.2 296.2 276.3 C297.2 278.5 298.1 280.6 298.3 282.8 C298.5 285.1 298.1 287.3 297.5 289.6 C296.9 292.0 295.6 294.3 294.7 296.7 C293.7 299.0 292.4 301.4 291.8 303.7 C291.2 306.0 290.8 308.3 291.0 310.5 C291.2 312.7 292.1 314.9 293.1 317.0 C294.2 319.2 295.9 321.2 297.3 323.3 C298.7 325.4 300.5 327.5 301.5 329.6 C302.6 331.8 303.4 333.9 303.6 336.2 C303.9 338.4 303.5 340.7 302.9 343.0 C302.2 345.3 300.5 348.8 300.0 350.0" stroke="#2a2a2a" stroke-width="0.75" fill="none" stroke-opacity="1" stroke-linecap="round"/><path d="M308.0 250.0 C308.8 251.4 311.4 255.7 312.5 258.7 C313.6 261.6 314.5 264.5 314.6 267.5 C314.8 270.6 314.1 273.6 313.4 276.7 C312.7 279.8 311.2 283.0 310.3 286.1 C309.4 289.2 308.2 292.3 307.9 295.4 C307.5 298.5 307.6 301.5 308.3 304.4 C308.9 307.4 310.4 310.3 311.8 313.2 C313.2 316.1 315.3 318.9 316.7 321.8 C318.1 324.7 319.6 327.6 320.2 330.6 C320.9 333.5 321.0 336.5 320.6 339.6 C320.3 342.7 319.1 345.8 318.2 348.9 C317.3 352.0 315.6 356.7 315.1 358.3" stroke="#2a2a2a" stroke-width="0.75" fill="none" stroke-opacity="1" stroke-linecap="round"/><path d="M316.0 246.0 C316.7 247.4 319.2 251.7 320.4 254.7 C321.7 257.6 322.7 260.6 323.3 263.6 C323.8 266.7 323.9 269.8 323.8 273.0 C323.7 276.2 323.0 279.4 322.7 282.7 C322.3 285.9 321.7 289.2 321.6 292.3 C321.5 295.5 321.5 298.7 322.1 301.7 C322.6 304.8 323.7 307.7 324.9 310.7 C326.1 313.6 327.9 316.4 329.3 319.3 C330.8 322.2 332.6 325.1 333.8 328.0 C335.0 330.9 336.0 333.9 336.6 337.0 C337.2 340.0 337.2 343.2 337.1 346.3 C337.0 349.5 336.2 354.4 336.0 356.0" stroke="#2a2a2a" stroke-width="0.75" fill="none" stroke-opacity="1" stroke-linecap="round"/><path d="M296.0 290.0 C296.8 291.2 299.6 294.8 300.9 297.3 C302.2 299.8 303.3 302.3 303.9 305.0 C304.4 307.7 304.4 310.6 304.3 313.4 C304.2 316.3 303.5 319.3 303.2 322.2 C302.9 325.1 302.5 328.1 302.6 330.8 C302.8 333.6 303.3 336.3 304.3 338.9 C305.3 341.5 306.9 343.9 308.4 346.4 C310.0 348.8 312.0 351.2 313.6 353.6 C315.1 356.1 317.0 359.8 317.7 361.1" stroke="#2a2a2a" stroke-width="0.75" fill="none" stroke-opacity="1" stroke-linecap="round"/><path d="M286.0 300.0 C286.6 300.9 288.4 303.5 289.3 305.3 C290.2 307.1 291.0 308.9 291.4 310.9 C291.8 312.8 291.9 314.8 291.8 316.8 C291.8 318.8 291.3 320.9 291.0 323.0 C290.7 325.1 290.2 327.2 290.2 329.2 C290.1 331.2 290.2 333.2 290.6 335.1 C291.0 337.1 291.8 338.9 292.7 340.7 C293.6 342.5 295.4 345.1 296.0 346.0" stroke="#2a2a2a" stroke-width="0.75" fill="none" stroke-opacity="1" stroke-linecap="round"/><path d="M324.0 262.0 C324.8 263.4 327.7 267.5 329.0 270.3 C330.4 273.1 331.6 276.0 332.3 279.1 C333.0 282.1 333.1 285.2 333.1 288.4 C333.1 291.6 332.5 294.9 332.3 298.1 C332.1 301.3 331.7 304.6 331.9 307.8 C332.0 310.9 332.5 314.0 333.4 316.9 C334.3 319.9 335.8 322.7 337.3 325.5 C338.8 328.3 340.9 331.0 342.6 333.8 C344.2 336.5 346.0 339.3 347.2 342.2 C348.4 345.1 349.3 349.6 349.7 351.1" stroke="#2a2a2a" stroke-width="0.75" fill="none" stroke-opacity="1" stroke-linecap="round"/><path d="M338.0 300.0 C338.7 301.0 341.2 303.9 342.5 306.0 C343.8 308.1 345.0 310.2 345.8 312.5 C346.6 314.7 347.1 317.1 347.5 319.5 C347.9 321.9 347.8 324.5 348.0 327.0 C348.2 329.5 348.1 332.1 348.5 334.5 C348.9 336.9 349.4 339.3 350.2 341.5 C351.0 343.8 352.2 345.9 353.5 348.0 C354.8 350.1 357.3 353.0 358.0 354.0" stroke="#2a2a2a" stroke-width="0.75" fill="none" stroke-opacity="1" stroke-linecap="round"/><path d="M428.0 230.0 C428.7 231.4 431.3 235.6 432.4 238.5 C433.6 241.4 434.5 244.3 434.9 247.3 C435.3 250.4 435.1 253.5 434.8 256.6 C434.5 259.7 433.6 263.0 433.2 266.1 C432.7 269.3 432.1 272.5 432.1 275.6 C432.1 278.7 432.4 281.7 433.2 284.6 C434.0 287.6 435.5 290.4 436.9 293.3 C438.3 296.1 440.2 298.9 441.6 301.7 C443.0 304.6 444.5 307.4 445.3 310.4 C446.1 313.3 446.4 316.3 446.4 319.4 C446.4 322.5 445.8 325.7 445.3 328.9 C444.9 332.0 444.0 336.8 443.7 338.4" stroke="#2a2a2a" stroke-width="0.75" fill="none" stroke-opacity="1" stroke-linecap="round"/><path d="M440.0 232.0 C440.9 233.1 443.8 236.3 445.3 238.6 C446.7 241.0 448.0 243.3 448.7 245.9 C449.4 248.4 449.5 251.2 449.6 253.9 C449.6 256.7 449.1 259.7 449.0 262.5 C448.9 265.3 448.6 268.2 448.9 270.8 C449.3 273.5 449.9 276.1 451.0 278.5 C452.2 280.9 453.9 283.1 455.6 285.4 C457.2 287.6 459.4 289.7 461.1 291.9 C462.8 294.2 464.9 297.7 465.6 298.8" stroke="#2a2a2a" stroke-width="0.75" fill="none" stroke-opacity="1" stroke-linecap="round"/><path d="M420.0 280.0 C420.8 281.2 423.4 284.7 424.7 287.1 C425.9 289.6 426.9 292.1 427.4 294.7 C427.9 297.3 427.8 300.0 427.6 302.8 C427.4 305.6 426.7 308.5 426.3 311.3 C425.9 314.1 425.4 317.0 425.5 319.7 C425.6 322.4 426.1 325.0 427.0 327.5 C427.8 330.0 429.4 332.4 430.9 334.8 C432.3 337.2 434.3 339.5 435.8 341.9 C437.3 344.3 439.1 347.9 439.7 349.2" stroke="#2a2a2a" stroke-width="0.75" fill="none" stroke-opacity="1" stroke-linecap="round"/><path d="M448.0 280.0 C448.6 281.1 450.7 284.3 451.8 286.5 C452.9 288.7 453.8 290.9 454.4 293.3 C455.0 295.6 455.2 298.0 455.3 300.5 C455.4 302.9 455.1 305.5 455.0 308.0 C454.9 310.5 454.6 313.1 454.7 315.5 C454.8 318.0 455.0 320.4 455.6 322.7 C456.2 325.1 457.1 327.3 458.2 329.5 C459.3 331.7 461.4 334.9 462.0 336.0" stroke="#2a2a2a" stroke-width="0.75" fill="none" stroke-opacity="1" stroke-linecap="round"/><path d="M410.0 300.0 C410.7 301.0 413.0 303.8 414.3 305.8 C415.5 307.8 416.6 309.9 417.3 312.0 C418.1 314.2 418.5 316.5 418.8 318.8 C419.0 321.1 418.9 323.6 419.0 326.0 C419.1 328.4 419.0 330.9 419.2 333.2 C419.5 335.5 419.9 337.8 420.7 340.0 C421.4 342.1 422.5 344.2 423.7 346.2 C425.0 348.2 427.3 351.0 428.0 352.0" stroke="#2a2a2a" stroke-width="0.75" fill="none" stroke-opacity="1" stroke-linecap="round"/><path d="M312.0 176.0 C312.6 175.3 314.1 173.2 315.3 172.1 C316.6 171.0 317.8 170.0 319.2 169.3 C320.6 168.6 322.2 168.3 323.8 168.1 C325.5 167.9 327.3 168.0 329.0 168.0 C330.7 168.0 332.5 168.1 334.2 167.9 C335.8 167.7 337.4 167.4 338.8 166.7 C340.2 166.0 341.4 165.0 342.7 163.9 C343.9 162.8 345.4 160.7 346.0 160.0" stroke="#2a2a2a" stroke-width="0.75" fill="none" stroke-opacity="1" stroke-linecap="round"/><path d="M330.0 172.0 C330.5 171.5 332.0 169.9 333.2 169.0 C334.3 168.1 335.4 167.3 336.7 166.7 C337.9 166.1 339.3 165.7 340.7 165.5 C342.0 165.2 343.6 165.2 345.0 165.0 C346.4 164.8 348.0 164.8 349.3 164.5 C350.7 164.3 352.1 163.9 353.3 163.3 C354.6 162.7 355.7 161.9 356.8 161.0 C358.0 160.1 359.5 158.5 360.0 158.0" stroke="#2a2a2a" stroke-width="0.75" fill="none" stroke-opacity="1" stroke-linecap="round"/></g></svg>
<div class="a" style="left:224.5px;top:153.2px;width:285px;height:255.5px;background:;border:1.5px solid rgba(95,130,185,0.55)"></div>
<div class="a" style="left:221.60000000000002px;top:150.8px;width:6.4px;height:6.4px;background:#f4f6fa;border:1px solid #8fa8cc"></div>
<div class="a" style="left:364.3px;top:150.8px;width:6.4px;height:6.4px;background:#f4f6fa;border:1px solid #8fa8cc"></div>
<div class="a" style="left:505.8px;top:150.8px;width:6.4px;height:6.4px;background:#f4f6fa;border:1px solid #8fa8cc"></div>
<div class="a" style="left:221.60000000000002px;top:277.8px;width:6.4px;height:6.4px;background:#f4f6fa;border:1px solid #8fa8cc"></div>
<div class="a" style="left:505.8px;top:277.8px;width:6.4px;height:6.4px;background:#f4f6fa;border:1px solid #8fa8cc"></div>
<div class="a" style="left:221.60000000000002px;top:404.8px;width:6.4px;height:6.4px;background:#f4f6fa;border:1px solid #8fa8cc"></div>
<div class="a" style="left:364.3px;top:404.8px;width:6.4px;height:6.4px;background:#f4f6fa;border:1px solid #8fa8cc"></div>
<div class="a" style="left:505.8px;top:404.8px;width:6.4px;height:6.4px;background:#f4f6fa;border:1px solid #8fa8cc"></div>
<svg style="left:0;top:0" width="1024" height="539" viewBox="0 0 1024 539"><g transform="translate(652 99) scale(0.1678 0.1713) translate(-233 -86)"><path vector-effect="non-scaling-stroke" d="M325 165 C324 161 328 159 333 160 C338 160 342 158 347 157 C352 155 356 154 362 154" stroke="#3a3a3a" stroke-width="0.3" fill="none" stroke-opacity="1" stroke-linecap="round"/><path vector-effect="non-scaling-stroke" d="M325 166 C318 168 310 171 304 177 C299 184 296 192 296 198 C296 202 298 206 300 208" stroke="#1c1c1c" stroke-width="0.3" fill="none" stroke-opacity="1" stroke-linecap="round"/><path vector-effect="non-scaling-stroke" d="M302 180 C305 186 305 192 304 198 C304 203 304 206 305 209" stroke="#3a3a3a" stroke-width="0.3" fill="none" stroke-opacity="1" stroke-linecap="round"/><path vector-effect="non-scaling-stroke" d="M362 154 C376 152 392 154 404 158 C414 162 420 168 426 176 C432 184 438 188 446 196 C454 200 458 202 463 205" stroke="#1c1c1c" stroke-width="0.3" fill="none" stroke-opacity="1" stroke-linecap="round"/><path vector-effect="non-scaling-stroke" d="M386 157 C400 160 412 162 420 172 C426 180 430 184 435 186" stroke="#1c1c1c" stroke-width="0.3" fill="none" stroke-opacity="1" stroke-linecap="round"/><path vector-effect="non-scaling-stroke" d="M305 205 C300 192 304 180 316 173 C326 168 336 168 342 172" stroke="#1c1c1c" stroke-width="0.3" fill="none" stroke-opacity="1" stroke-linecap="round"/><path vector-effect="non-scaling-stroke" d="M310 206 C304 194 308 184 318 178 C328 173 338 174 344 180 C347 184 346 190 342 194" stroke="#1c1c1c" stroke-width="0.3" fill="none" stroke-opacity="1" stroke-linecap="round"/><path vector-effect="non-scaling-stroke" d="M316 208 C310 198 314 188 324 184 C332 181 340 184 342 190" stroke="#1c1c1c" stroke-width="0.3" fill="none" stroke-opacity="1" stroke-linecap="round"/><path vector-effect="non-scaling-stroke" d="M300 200 C296 186 302 176 312 170 C320 166 330 165 336 166" stroke="#1c1c1c" stroke-width="0.3" fill="none" stroke-opacity="1" stroke-linecap="round"/><path vector-effect="non-scaling-stroke" d="M322 210 C318 202 322 194 330 192 C338 190 344 194 344 200" stroke="#1c1c1c" stroke-width="0.3" fill="none" stroke-opacity="1" stroke-linecap="round"/><path vector-effect="non-scaling-stroke" d="M304 212 C312 212 320 210 326 206" stroke="#1c1c1c" stroke-width="0.3" fill="none" stroke-opacity="1" stroke-linecap="round"/><path vector-effect="non-scaling-stroke" d="M300 206 C306 214 318 216 328 212" stroke="#1c1c1c" stroke-width="0.3" fill="none" stroke-opacity="1" stroke-linecap="round"/><path vector-effect="non-scaling-stroke" d="M350 168 C356 172 360 178 362 184" stroke="#1c1c1c" stroke-width="0.3" fill="none" stroke-opacity="1" stroke-linecap="round"/><path vector-effect="non-scaling-stroke" d="M334 176 C342 182 346 190 346 198" stroke="#1c1c1c" stroke-width="0.3" fill="none" stroke-opacity="1" stroke-linecap="round"/><path vector-effect="non-scaling-stroke" d="M312 190 C318 196 326 198 334 196" stroke="#1c1c1c" stroke-width="0.3" fill="none" stroke-opacity="1" stroke-linecap="round"/><path vector-effect="non-scaling-stroke" d="M312 226 C318 230 324 232 330 230" stroke="#1c1c1c" stroke-width="0.3" fill="none" stroke-opacity="1" stroke-linecap="round"/><path vector-effect="non-scaling-stroke" d="M313 231 C319 235 325 236 331 234" stroke="#1c1c1c" stroke-width="0.3" fill="none" stroke-opacity="1" stroke-linecap="round"/><path vector-effect="non-scaling-stroke" d="M310 218 C316 222 322 224 330 222" stroke="#3a3a3a" stroke-width="0.3" fill="none" stroke-opacity="1" stroke-linecap="round"/><path vector-effect="non-scaling-stroke" d="M360.6 160 C362 165 368 170 374 171 C382 175 385 184 380 191 C378 194 374 195 371 193" stroke="#1c1c1c" stroke-width="0.3" fill="none" stroke-opacity="1" stroke-linecap="round"/><path vector-effect="non-scaling-stroke" d="M371.7 160 C378 163 386 168 389 178 C390 186 386 193 381 196 C378 198 376 198 375 196" stroke="#1c1c1c" stroke-width="0.3" fill="none" stroke-opacity="1" stroke-linecap="round"/><path vector-effect="non-scaling-stroke" d="M384 158.6 C394 163 402 170 405 180 C407 189 404 195 398 197 C395 198 392 197 391 195" stroke="#1c1c1c" stroke-width="0.3" fill="none" stroke-opacity="1" stroke-linecap="round"/><path vector-effect="non-scaling-stroke" d="M386 157 C396 159 408 162 413 165 C418 170 422 176 426 181 C430 184 433 185 435 186" stroke="#1c1c1c" stroke-width="0.3" fill="none" stroke-opacity="1" stroke-linecap="round"/><path vector-effect="non-scaling-stroke" d="M402.8 157 C410 160 416 164 421.7 172.4" stroke="#1c1c1c" stroke-width="0.3" fill="none" stroke-opacity="1" stroke-linecap="round"/><path vector-effect="non-scaling-stroke" d="M355 173.6 C362 176 368 182 369 188 C370 193 366 195 360 195" stroke="#1c1c1c" stroke-width="0.3" fill="none" stroke-opacity="1" stroke-linecap="round"/><path vector-effect="non-scaling-stroke" d="M355 180 C360 183 364 188 361 192 C359 194 357 194 356 193" stroke="#1c1c1c" stroke-width="0.3" fill="none" stroke-opacity="1" stroke-linecap="round"/><path vector-effect="non-scaling-stroke" d="M346 176 C352 180 355 188 352 196 C351 199 349 200 347 199" stroke="#1c1c1c" stroke-width="0.3" fill="none" stroke-opacity="1" stroke-linecap="round"/><path vector-effect="non-scaling-stroke" d="M394 168 C400 174 401 182 397 188" stroke="#1c1c1c" stroke-width="0.3" fill="none" stroke-opacity="1" stroke-linecap="round"/><path vector-effect="non-scaling-stroke" d="M364 174 C371 180 374 188 370 195" stroke="#1c1c1c" stroke-width="0.3" fill="none" stroke-opacity="1" stroke-linecap="round"/><path vector-effect="non-scaling-stroke" d="M410.6 181.3 C413 188 415 196 417 208" stroke="#1c1c1c" stroke-width="0.3" fill="none" stroke-opacity="1" stroke-linecap="round"/><path vector-effect="non-scaling-stroke" d="M414 166 C418 172 420 180 418 190 C417 194 415 196 412 196" stroke="#1c1c1c" stroke-width="0.3" fill="none" stroke-opacity="1" stroke-linecap="round"/><path vector-effect="non-scaling-stroke" d="M340 186 C346 190 348 198 344 204" stroke="#1c1c1c" stroke-width="0.3" fill="none" stroke-opacity="1" stroke-linecap="round"/><path vector-effect="non-scaling-stroke" d="M415 170 C418 176 422 180 426 184 C430 187 434 188 438.6 188.2" stroke="#1c1c1c" stroke-width="0.3" fill="none" stroke-opacity="1" stroke-linecap="round"/><path vector-effect="non-scaling-stroke" d="M411 177.8 C414 182 418 186 424 188 C430 190 436 190 440 190" stroke="#1c1c1c" stroke-width="0.3" fill="none" stroke-opacity="1" stroke-linecap="round"/><path vector-effect="non-scaling-stroke" d="M433.4 196 C440 198 448 201 463.3 205" stroke="#1c1c1c" stroke-width="0.3" fill="none" stroke-opacity="1" stroke-linecap="round"/><path vector-effect="non-scaling-stroke" d="M434.7 202.5 C442 206 450 208 462 205" stroke="#1c1c1c" stroke-width="0.3" fill="none" stroke-opacity="1" stroke-linecap="round"/><path vector-effect="non-scaling-stroke" d="M436 209 C440 212 446 213 451.6 211.6" stroke="#1c1c1c" stroke-width="0.3" fill="none" stroke-opacity="1" stroke-linecap="round"/><path vector-effect="non-scaling-stroke" d="M438.6 218 C442 221 446 222 451.6 222.6" stroke="#1c1c1c" stroke-width="0.3" fill="none" stroke-opacity="1" stroke-linecap="round"/><path vector-effect="non-scaling-stroke" d="M412.6 192 C410 198 410 206 417.8 211.6 C421 212 424 211 426.9 210.3" stroke="#1c1c1c" stroke-width="0.3" fill="none" stroke-opacity="1" stroke-linecap="round"/><path vector-effect="non-scaling-stroke" d="M417.8 212.9 C419 222 420 232 420.4 240" stroke="#1c1c1c" stroke-width="0.3" fill="none" stroke-opacity="1" stroke-linecap="round"/><path vector-effect="non-scaling-stroke" d="M427 209 C425 216 424 222 424.3 224.5 C426 230 429 236 430.8 240" stroke="#1c1c1c" stroke-width="0.3" fill="none" stroke-opacity="1" stroke-linecap="round"/><path vector-effect="non-scaling-stroke" d="M433.4 198.6 C434 210 433 216 433.4 222 C434 230 435 236 436 240" stroke="#1c1c1c" stroke-width="0.3" fill="none" stroke-opacity="1" stroke-linecap="round"/><path vector-effect="non-scaling-stroke" d="M436 212.9 C440 218 443 222 445 224.5 C448 230 450 236 451.6 240" stroke="#1c1c1c" stroke-width="0.3" fill="none" stroke-opacity="1" stroke-linecap="round"/><path vector-effect="non-scaling-stroke" d="M305 239.5 C301 243 298 247 296.7 250.6 C294 255 292 259 289.7 261.8" stroke="#1c1c1c" stroke-width="0.3" fill="none" stroke-opacity="1" stroke-linecap="round"/><path vector-effect="non-scaling-stroke" d="M296.7 275.7 C292 282 290 288 288.4 292.4 C286 300 285 306 285.6 312 C286 320 287 326 288.4 331.4 C290 336 293 340 296.7 342.6" stroke="#1c1c1c" stroke-width="0.3" fill="none" stroke-opacity="1" stroke-linecap="round"/><path vector-effect="non-scaling-stroke" d="M321.8 234 C324 248 326 262 327.4 275.7 C330 290 336 302 344 312 C350 322 356 330 360.8 337 C362 342 361 348 358 351" stroke="#1c1c1c" stroke-width="0.3" fill="none" stroke-opacity="1" stroke-linecap="round"/><path vector-effect="non-scaling-stroke" d="M305 232 C308 246 308 260 304 274 C300 290 298 306 302 322 C306 336 312 346 322 354" stroke="#1c1c1c" stroke-width="0.3" fill="none" stroke-opacity="1" stroke-linecap="round"/><path vector-effect="non-scaling-stroke" d="M312 234 C316 250 318 266 314 282 C310 298 310 314 316 330 C320 340 326 348 334 356" stroke="#1c1c1c" stroke-width="0.3" fill="none" stroke-opacity="1" stroke-linecap="round"/><path vector-effect="non-scaling-stroke" d="M318 244 C322 258 324 272 322 288 C320 304 322 320 330 334 C336 344 344 352 352 358" stroke="#1c1c1c" stroke-width="0.3" fill="none" stroke-opacity="1" stroke-linecap="round"/><path vector-effect="non-scaling-stroke" d="M300 256 C296 270 294 284 296 300 C298 316 300 330 306 342" stroke="#1c1c1c" stroke-width="0.3" fill="none" stroke-opacity="1" stroke-linecap="round"/><path vector-effect="non-scaling-stroke" d="M326 250 C330 266 332 282 332 296 C332 312 338 326 348 338" stroke="#1c1c1c" stroke-width="0.3" fill="none" stroke-opacity="1" stroke-linecap="round"/><path vector-effect="non-scaling-stroke" d="M296 300 C292 314 292 330 298 344 C302 352 310 358 318 362" stroke="#1c1c1c" stroke-width="0.3" fill="none" stroke-opacity="1" stroke-linecap="round"/><path vector-effect="non-scaling-stroke" d="M330 300 C336 314 344 324 352 330 C358 334 362 340 362 346" stroke="#1c1c1c" stroke-width="0.3" fill="none" stroke-opacity="1" stroke-linecap="round"/><path vector-effect="non-scaling-stroke" d="M306 300 C310 316 318 330 328 342 C334 350 340 356 344 362" stroke="#1c1c1c" stroke-width="0.3" fill="none" stroke-opacity="1" stroke-linecap="round"/><path vector-effect="non-scaling-stroke" d="M290 320 C294 334 302 346 312 354" stroke="#1c1c1c" stroke-width="0.3" fill="none" stroke-opacity="1" stroke-linecap="round"/><path vector-effect="non-scaling-stroke" d="M336 320 C338 332 342 342 350 350" stroke="#1c1c1c" stroke-width="0.3" fill="none" stroke-opacity="1" stroke-linecap="round"/><path vector-effect="non-scaling-stroke" d="M316 264 C312 280 306 296 304 312" stroke="#1c1c1c" stroke-width="0.3" fill="none" stroke-opacity="1" stroke-linecap="round"/><path vector-effect="non-scaling-stroke" d="M298 342 C304 348 310 352 318 354" stroke="#1c1c1c" stroke-width="0.3" fill="none" stroke-opacity="1" stroke-linecap="round"/><path vector-effect="non-scaling-stroke" d="M286 316 C288 330 294 340 300 346" stroke="#1c1c1c" stroke-width="0.3" fill="none" stroke-opacity="1" stroke-linecap="round"/><path vector-effect="non-scaling-stroke" d="M278 322 C276 326 274 330 272 332" stroke="#666" stroke-width="0.3" fill="none" stroke-opacity="1" stroke-linecap="round"/><path vector-effect="non-scaling-stroke" d="M282 326 C280 330 278 334 276 336" stroke="#666" stroke-width="0.3" fill="none" stroke-opacity="1" stroke-linecap="round"/><path vector-effect="non-scaling-stroke" d="M420.6 225.6 C426 236 430 246 431.8 256 C428 266 420 276 417.9 284 C418 296 419 308 420.6 317.5 C424 326 430 332 434.6 337" stroke="#1c1c1c" stroke-width="0.3" fill="none" stroke-opacity="1" stroke-linecap="round"/><path vector-effect="non-scaling-stroke" d="M434.6 220 C438 228 442 236 445.7 242.3 C452 252 458 260 462.4 267.4 C464 274 466 282 465.2 286.9 C464 290 462 292 459.6 292.4" stroke="#1c1c1c" stroke-width="0.3" fill="none" stroke-opacity="1" stroke-linecap="round"/><path vector-effect="non-scaling-stroke" d="M440 253.4 C446 266 452 280 454 292.4 C456 302 458 310 459.6 317.5 C459 322 457 326 454 328.6" stroke="#1c1c1c" stroke-width="0.3" fill="none" stroke-opacity="1" stroke-linecap="round"/><path vector-effect="non-scaling-stroke" d="M425 240 C432 252 438 266 440 280 C442 296 444 312 446 326" stroke="#1c1c1c" stroke-width="0.3" fill="none" stroke-opacity="1" stroke-linecap="round"/><path vector-effect="non-scaling-stroke" d="M430 270 C434 284 438 298 440 312 C442 322 444 330 448 336" stroke="#1c1c1c" stroke-width="0.3" fill="none" stroke-opacity="1" stroke-linecap="round"/><path vector-effect="non-scaling-stroke" d="M406.7 320 C404 326 403 330 404 334.2 C407 340 410 345 415 348 C422 351 430 351 437.4 351" stroke="#1c1c1c" stroke-width="0.3" fill="none" stroke-opacity="1" stroke-linecap="round"/><path vector-effect="non-scaling-stroke" d="M412 316 C410 326 412 336 420 344" stroke="#1c1c1c" stroke-width="0.3" fill="none" stroke-opacity="1" stroke-linecap="round"/><path vector-effect="non-scaling-stroke" d="M445.7 331.4 C452 333 458 334 465.2 334.2" stroke="#1c1c1c" stroke-width="0.3" fill="none" stroke-opacity="1" stroke-linecap="round"/><path vector-effect="non-scaling-stroke" d="M448 300 C452 312 456 324 456 336" stroke="#1c1c1c" stroke-width="0.3" fill="none" stroke-opacity="1" stroke-linecap="round"/><path vector-effect="non-scaling-stroke" d="M436 300 C440 314 444 326 444 340" stroke="#1c1c1c" stroke-width="0.3" fill="none" stroke-opacity="1" stroke-linecap="round"/><path vector-effect="non-scaling-stroke" d="M424 300 C426 314 430 326 436 340" stroke="#1c1c1c" stroke-width="0.3" fill="none" stroke-opacity="1" stroke-linecap="round"/><path vector-effect="non-scaling-stroke" d="M468 238 C469 240 470 242 470 244" stroke="#666" stroke-width="0.3" fill="none" stroke-opacity="1" stroke-linecap="round"/><path vector-effect="non-scaling-stroke" d="M472 246 C473 248 473 250 472 252" stroke="#666" stroke-width="0.3" fill="none" stroke-opacity="1" stroke-linecap="round"/><path vector-effect="non-scaling-stroke" d="M328.7 223.6 C329 236 330 250 330.6 260.7 C333 270 336 278 339.8 283 C344 292 348 300 352.8 305 C358 310 364 314 370 314.7 C378 314.5 386 313 390 311 C394 308 397 304 399.2 301.5 C404 294 409 286 412.2 279.2 C416 270 418 260 417.8 251.4 C418 240 417 228 416 220" stroke="#1c1c1c" stroke-width="0.3" fill="none" stroke-opacity="1" stroke-linecap="round"/><path vector-effect="non-scaling-stroke" d="M336 223.6 C344 222 352 223 358.4 225.4" stroke="#666" stroke-width="0.3" fill="none" stroke-opacity="1" stroke-linecap="round"/><path vector-effect="non-scaling-stroke" d="M377 219 C384 216 392 214 399 213.3" stroke="#666" stroke-width="0.3" fill="none" stroke-opacity="1" stroke-linecap="round"/><path vector-effect="non-scaling-stroke" d="M336 232.8 C340 229 344 227.3 347 227.3 C352 227 356 229 358.4 231" stroke="#1c1c1c" stroke-width="0.3" fill="none" stroke-opacity="1" stroke-linecap="round"/><path vector-effect="non-scaling-stroke" d="M337 234 C342 236.5 350 237.5 357 234" stroke="#666" stroke-width="0.3" fill="none" stroke-opacity="1" stroke-linecap="round"/><path vector-effect="non-scaling-stroke" d="M378.8 229 C384 226 388 224.5 391.8 224.5 C397 224 402 225 406.6 227.3" stroke="#1c1c1c" stroke-width="0.3" fill="none" stroke-opacity="1" stroke-linecap="round"/><path vector-effect="non-scaling-stroke" d="M380 231 C386 235 396 236 405 230" stroke="#666" stroke-width="0.3" fill="none" stroke-opacity="1" stroke-linecap="round"/><path vector-effect="non-scaling-stroke" d="M384 232.8 C387 236 390 238 393.6 239.3" stroke="#666" stroke-width="0.3" fill="none" stroke-opacity="1" stroke-linecap="round"/><ellipse cx="346.3" cy="233" rx="2.2" ry="1.8" fill="#444"/><ellipse cx="392.7" cy="228" rx="2.2" ry="1.8" fill="#444"/><path vector-effect="non-scaling-stroke" d="M369.5 225.4 C369 232 368.6 238 368.6 242" stroke="#666" stroke-width="0.3" fill="none" stroke-opacity="1" stroke-linecap="round"/><path vector-effect="non-scaling-stroke" d="M356.5 255 C355 252 357 249 360 250 C362 251 363 252 364 253 C367 256 372 256 376 255 C380 254 382 252 384.4 253 C386 255 385 258 382 258" stroke="#1c1c1c" stroke-width="0.3" fill="none" stroke-opacity="1" stroke-linecap="round"/><path vector-effect="non-scaling-stroke" d="M358 258 C362 258 364 257 366 256" stroke="#3a3a3a" stroke-width="0.3" fill="none" stroke-opacity="1" stroke-linecap="round"/><circle cx="375" cy="249.5" r="0.9" fill="#555"/><path vector-effect="non-scaling-stroke" d="M368.6 264.4 C368 268 368.6 271.8 368.6 271.8" stroke="#666" stroke-width="0.3" fill="none" stroke-opacity="1" stroke-linecap="round"/><path vector-effect="non-scaling-stroke" d="M374.2 264 C375 268 374 272 374 272" stroke="#666" stroke-width="0.3" fill="none" stroke-opacity="1" stroke-linecap="round"/><path vector-effect="non-scaling-stroke" d="M358.4 281 C362 279 366 276 369.5 275.5 C373 275 377 276 380.7 276.4 C384 277 387 278 390 280" stroke="#1c1c1c" stroke-width="0.3" fill="none" stroke-opacity="1" stroke-linecap="round"/><path vector-effect="non-scaling-stroke" d="M358 283 C366 284 380 283.5 390 281" stroke="#1c1c1c" stroke-width="0.3" fill="none" stroke-opacity="1" stroke-linecap="round"/><path vector-effect="non-scaling-stroke" d="M364 286.6 C368 288.5 373 289.4 377 289.4 C381 289 384 288 386 286.6" stroke="#3a3a3a" stroke-width="0.3" fill="none" stroke-opacity="1" stroke-linecap="round"/><path vector-effect="non-scaling-stroke" d="M366 283.5 C370 285 376 285 382 283.5" stroke="#333" stroke-width="0.3" fill="none" stroke-opacity="1" stroke-linecap="round"/><path vector-effect="non-scaling-stroke" d="M364 292 C368 295 378 296 384 293" stroke="#666" stroke-width="0.3" fill="none" stroke-opacity="1" stroke-linecap="round"/><path vector-effect="non-scaling-stroke" d="M396 280 C398 286 398 292 396 296" stroke="#666" stroke-width="0.3" fill="none" stroke-opacity="1" stroke-linecap="round"/><path vector-effect="non-scaling-stroke" d="M233.3 383.4 C238 376 242 371 245 368.4 C250 363 256 359 261.7 356.7 C272 350 284 344 295 340" stroke="#1c1c1c" stroke-width="0.3" fill="none" stroke-opacity="1" stroke-linecap="round"/><path vector-effect="non-scaling-stroke" d="M235 386 C240 378 244 373 248 370 C254 365 260 361 266 358 C276 352 286 347 297 343" stroke="#3a3a3a" stroke-width="0.3" fill="none" stroke-opacity="1" stroke-linecap="round"/><path vector-effect="non-scaling-stroke" d="M288.4 345 C294 350 298 354 301.8 356.7 C306 362 310 368 315 373.4 C318 378 322 383 325 386.8 C330 392 334 394 340 397 C350 402 360 404 370 404" stroke="#1c1c1c" stroke-width="0.3" fill="none" stroke-opacity="1" stroke-linecap="round"/><path vector-effect="non-scaling-stroke" d="M298 348 C306 356 312 362 318 370 C324 378 330 386 338 392" stroke="#3a3a3a" stroke-width="0.3" fill="none" stroke-opacity="1" stroke-linecap="round"/><path vector-effect="non-scaling-stroke" d="M454.5 351 C451 358 448 364 446 369 C440 378 434 384 430 389.8 C420 396 410 400 400 402.5 C390 404 380 405 370 404" stroke="#1c1c1c" stroke-width="0.3" fill="none" stroke-opacity="1" stroke-linecap="round"/><path vector-effect="non-scaling-stroke" d="M446 347 C452 348 456 348 460.6 349 C468 352 474 355 481 359 C486 364 490 370 495 377.6 C500 386 504 394 508.6 404" stroke="#1c1c1c" stroke-width="0.3" fill="none" stroke-opacity="1" stroke-linecap="round"/><path vector-effect="non-scaling-stroke" d="M448 351 C456 352 462 353 468 356 C476 360 482 364 486 370 C492 378 498 388 502 396 C504 400 506 404 507 407" stroke="#3a3a3a" stroke-width="0.3" fill="none" stroke-opacity="1" stroke-linecap="round"/><path vector-effect="non-scaling-stroke" d="M340 398 C352 404 364 407 378 406" stroke="#222" stroke-width="0.3" fill="none" stroke-opacity="1" stroke-linecap="round"/><path vector-effect="non-scaling-stroke" d="M300.0 236.0 C300.3 237.2 301.7 241.0 302.1 243.5 C302.4 245.9 302.6 248.4 302.2 250.7 C301.8 253.1 300.8 255.4 299.7 257.6 C298.6 259.9 296.9 262.1 295.6 264.3 C294.4 266.6 292.9 268.8 292.1 271.1 C291.3 273.4 290.9 275.8 290.9 278.2 C290.9 280.6 291.6 283.1 292.2 285.6 C292.8 288.1 293.9 290.6 294.5 293.1 C295.1 295.6 295.6 299.2 295.8 300.5" stroke="#2a2a2a" stroke-width="0.3" fill="none" stroke-opacity="1" stroke-linecap="round"/><path vector-effect="non-scaling-stroke" d="M292.0 270.0 C292.7 271.1 295.1 274.2 296.2 276.3 C297.2 278.5 298.1 280.6 298.3 282.8 C298.5 285.1 298.1 287.3 297.5 289.6 C296.9 292.0 295.6 294.3 294.7 296.7 C293.7 299.0 292.4 301.4 291.8 303.7 C291.2 306.0 290.8 308.3 291.0 310.5 C291.2 312.7 292.1 314.9 293.1 317.0 C294.2 319.2 295.9 321.2 297.3 323.3 C298.7 325.4 300.5 327.5 301.5 329.6 C302.6 331.8 303.4 333.9 303.6 336.2 C303.9 338.4 303.5 340.7 302.9 343.0 C302.2 345.3 300.5 348.8 300.0 350.0" stroke="#2a2a2a" stroke-width="0.3" fill="none" stroke-opacity="1" stroke-linecap="round"/><path vector-effect="non-scaling-stroke" d="M308.0 250.0 C308.8 251.4 311.4 255.7 312.5 258.7 C313.6 261.6 314.5 264.5 314.6 267.5 C314.8 270.6 314.1 273.6 313.4 276.7 C312.7 279.8 311.2 283.0 310.3 286.1 C309.4 289.2 308.2 292.3 307.9 295.4 C307.5 298.5 307.6 301.5 308.3 304.4 C308.9 307.4 310.4 310.3 311.8 313.2 C313.2 316.1 315.3 318.9 316.7 321.8 C318.1 324.7 319.6 327.6 320.2 330.6 C320.9 333.5 321.0 336.5 320.6 339.6 C320.3 342.7 319.1 345.8 318.2 348.9 C317.3 352.0 315.6 356.7 315.1 358.3" stroke="#2a2a2a" stroke-width="0.3" fill="none" stroke-opacity="1" stroke-linecap="round"/><path vector-effect="non-scaling-stroke" d="M316.0 246.0 C316.7 247.4 319.2 251.7 320.4 254.7 C321.7 257.6 322.7 260.6 323.3 263.6 C323.8 266.7 323.9 269.8 323.8 273.0 C323.7 276.2 323.0 279.4 322.7 282.7 C322.3 285.9 321.7 289.2 321.6 292.3 C321.5 295.5 321.5 298.7 322.1 301.7 C322.6 304.8 323.7 307.7 324.9 310.7 C326.1 313.6 327.9 316.4 329.3 319.3 C330.8 322.2 332.6 325.1 333.8 328.0 C335.0 330.9 336.0 333.9 336.6 337.0 C337.2 340.0 337.2 343.2 337.1 346.3 C337.0 349.5 336.2 354.4 336.0 356.0" stroke="#2a2a2a" stroke-width="0.3" fill="none" stroke-opacity="1" stroke-linecap="round"/><path vector-effect="non-scaling-stroke" d="M296.0 290.0 C296.8 291.2 299.6 294.8 300.9 297.3 C302.2 299.8 303.3 302.3 303.9 305.0 C304.4 307.7 304.4 310.6 304.3 313.4 C304.2 316.3 303.5 319.3 303.2 322.2 C302.9 325.1 302.5 328.1 302.6 330.8 C302.8 333.6 303.3 336.3 304.3 338.9 C305.3 341.5 306.9 343.9 308.4 346.4 C310.0 348.8 312.0 351.2 313.6 353.6 C315.1 356.1 317.0 359.8 317.7 361.1" stroke="#2a2a2a" stroke-width="0.3" fill="none" stroke-opacity="1" stroke-linecap="round"/><path vector-effect="non-scaling-stroke" d="M286.0 300.0 C286.6 300.9 288.4 303.5 289.3 305.3 C290.2 307.1 291.0 308.9 291.4 310.9 C291.8 312.8 291.9 314.8 291.8 316.8 C291.8 318.8 291.3 320.9 291.0 323.0 C290.7 325.1 290.2 327.2 290.2 329.2 C290.1 331.2 290.2 333.2 290.6 335.1 C291.0 337.1 291.8 338.9 292.7 340.7 C293.6 342.5 295.4 345.1 296.0 346.0" stroke="#2a2a2a" stroke-width="0.3" fill="none" stroke-opacity="1" stroke-linecap="round"/><path vector-effect="non-scaling-stroke" d="M324.0 262.0 C324.8 263.4 327.7 267.5 329.0 270.3 C330.4 273.1 331.6 276.0 332.3 279.1 C333.0 282.1 333.1 285.2 333.1 288.4 C333.1 291.6 332.5 294.9 332.3 298.1 C332.1 301.3 331.7 304.6 331.9 307.8 C332.0 310.9 332.5 314.0 333.4 316.9 C334.3 319.9 335.8 322.7 337.3 325.5 C338.8 328.3 340.9 331.0 342.6 333.8 C344.2 336.5 346.0 339.3 347.2 342.2 C348.4 345.1 349.3 349.6 349.7 351.1" stroke="#2a2a2a" stroke-width="0.3" fill="none" stroke-opacity="1" stroke-linecap="round"/><path vector-effect="non-scaling-stroke" d="M338.0 300.0 C338.7 301.0 341.2 303.9 342.5 306.0 C343.8 308.1 345.0 310.2 345.8 312.5 C346.6 314.7 347.1 317.1 347.5 319.5 C347.9 321.9 347.8 324.5 348.0 327.0 C348.2 329.5 348.1 332.1 348.5 334.5 C348.9 336.9 349.4 339.3 350.2 341.5 C351.0 343.8 352.2 345.9 353.5 348.0 C354.8 350.1 357.3 353.0 358.0 354.0" stroke="#2a2a2a" stroke-width="0.3" fill="none" stroke-opacity="1" stroke-linecap="round"/><path vector-effect="non-scaling-stroke" d="M428.0 230.0 C428.7 231.4 431.3 235.6 432.4 238.5 C433.6 241.4 434.5 244.3 434.9 247.3 C435.3 250.4 435.1 253.5 434.8 256.6 C434.5 259.7 433.6 263.0 433.2 266.1 C432.7 269.3 432.1 272.5 432.1 275.6 C432.1 278.7 432.4 281.7 433.2 284.6 C434.0 287.6 435.5 290.4 436.9 293.3 C438.3 296.1 440.2 298.9 441.6 301.7 C443.0 304.6 444.5 307.4 445.3 310.4 C446.1 313.3 446.4 316.3 446.4 319.4 C446.4 322.5 445.8 325.7 445.3 328.9 C444.9 332.0 444.0 336.8 443.7 338.4" stroke="#2a2a2a" stroke-width="0.3" fill="none" stroke-opacity="1" stroke-linecap="round"/><path vector-effect="non-scaling-stroke" d="M440.0 232.0 C440.9 233.1 443.8 236.3 445.3 238.6 C446.7 241.0 448.0 243.3 448.7 245.9 C449.4 248.4 449.5 251.2 449.6 253.9 C449.6 256.7 449.1 259.7 449.0 262.5 C448.9 265.3 448.6 268.2 448.9 270.8 C449.3 273.5 449.9 276.1 451.0 278.5 C452.2 280.9 453.9 283.1 455.6 285.4 C457.2 287.6 459.4 289.7 461.1 291.9 C462.8 294.2 464.9 297.7 465.6 298.8" stroke="#2a2a2a" stroke-width="0.3" fill="none" stroke-opacity="1" stroke-linecap="round"/><path vector-effect="non-scaling-stroke" d="M420.0 280.0 C420.8 281.2 423.4 284.7 424.7 287.1 C425.9 289.6 426.9 292.1 427.4 294.7 C427.9 297.3 427.8 300.0 427.6 302.8 C427.4 305.6 426.7 308.5 426.3 311.3 C425.9 314.1 425.4 317.0 425.5 319.7 C425.6 322.4 426.1 325.0 427.0 327.5 C427.8 330.0 429.4 332.4 430.9 334.8 C432.3 337.2 434.3 339.5 435.8 341.9 C437.3 344.3 439.1 347.9 439.7 349.2" stroke="#2a2a2a" stroke-width="0.3" fill="none" stroke-opacity="1" stroke-linecap="round"/><path vector-effect="non-scaling-stroke" d="M448.0 280.0 C448.6 281.1 450.7 284.3 451.8 286.5 C452.9 288.7 453.8 290.9 454.4 293.3 C455.0 295.6 455.2 298.0 455.3 300.5 C455.4 302.9 455.1 305.5 455.0 308.0 C454.9 310.5 454.6 313.1 454.7 315.5 C454.8 318.0 455.0 320.4 455.6 322.7 C456.2 325.1 457.1 327.3 458.2 329.5 C459.3 331.7 461.4 334.9 462.0 336.0" stroke="#2a2a2a" stroke-width="0.3" fill="none" stroke-opacity="1" stroke-linecap="round"/><path vector-effect="non-scaling-stroke" d="M410.0 300.0 C410.7 301.0 413.0 303.8 414.3 305.8 C415.5 307.8 416.6 309.9 417.3 312.0 C418.1 314.2 418.5 316.5 418.8 318.8 C419.0 321.1 418.9 323.6 419.0 326.0 C419.1 328.4 419.0 330.9 419.2 333.2 C419.5 335.5 419.9 337.8 420.7 340.0 C421.4 342.1 422.5 344.2 423.7 346.2 C425.0 348.2 427.3 351.0 428.0 352.0" stroke="#2a2a2a" stroke-width="0.3" fill="none" stroke-opacity="1" stroke-linecap="round"/><path vector-effect="non-scaling-stroke" d="M312.0 176.0 C312.6 175.3 314.1 173.2 315.3 172.1 C316.6 171.0 317.8 170.0 319.2 169.3 C320.6 168.6 322.2 168.3 323.8 168.1 C325.5 167.9 327.3 168.0 329.0 168.0 C330.7 168.0 332.5 168.1 334.2 167.9 C335.8 167.7 337.4 167.4 338.8 166.7 C340.2 166.0 341.4 165.0 342.7 163.9 C343.9 162.8 345.4 160.7 346.0 160.0" stroke="#2a2a2a" stroke-width="0.3" fill="none" stroke-opacity="1" stroke-linecap="round"/><path vector-effect="non-scaling-stroke" d="M330.0 172.0 C330.5 171.5 332.0 169.9 333.2 169.0 C334.3 168.1 335.4 167.3 336.7 166.7 C337.9 166.1 339.3 165.7 340.7 165.5 C342.0 165.2 343.6 165.2 345.0 165.0 C346.4 164.8 348.0 164.8 349.3 164.5 C350.7 164.3 352.1 163.9 353.3 163.3 C354.6 162.7 355.7 161.9 356.8 161.0 C358.0 160.1 359.5 158.5 360.0 158.0" stroke="#2a2a2a" stroke-width="0.3" fill="none" stroke-opacity="1" stroke-linecap="round"/></g></svg>
</body></html>
